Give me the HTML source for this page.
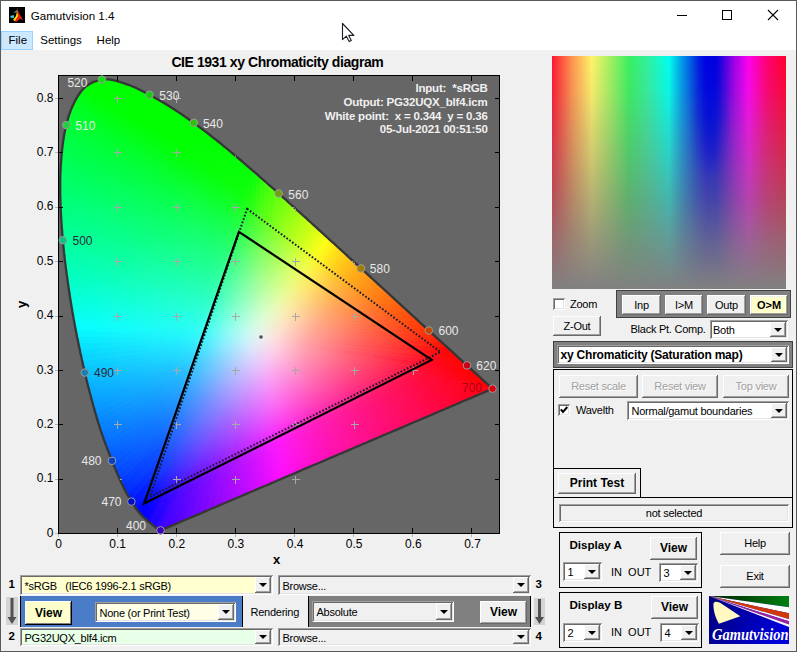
<!DOCTYPE html>
<html><head><meta charset="utf-8">
<style>
*{margin:0;padding:0;box-sizing:border-box}
html,body{width:797px;height:652px;overflow:hidden;background:#f0f0f0;font-family:"Liberation Sans",sans-serif;color:#000}
.a{position:absolute}
#win{position:absolute;left:0;top:0;width:797px;height:652px;border:1px solid #5a5a5a;background:#f0f0f0}
#title{position:absolute;left:0;top:0;width:797px;height:30px;background:#fff}
#menu{position:absolute;left:0;top:30px;width:797px;height:20px;background:#fff}
.mi{position:absolute;top:4.7px;font-size:11.5px;line-height:1}
.t{position:absolute;white-space:nowrap;line-height:1}
.btn{position:absolute;background:#f0f0f0;box-shadow:inset -1px -1px #696969,inset 1px 1px #fff,inset -2px -2px #a0a0a0,inset 2px 2px #f0f0f0;text-align:center;white-space:nowrap}
.dd{position:absolute;background:#fff;box-shadow:inset 1px 1px #a0a0a0,inset -1px -1px #fff,inset 2px 2px #696969,inset -2px -2px #e3e3e3;white-space:nowrap;overflow:hidden}
.dd .ar{position:absolute;right:2px;top:2px;bottom:2px;width:16px;background:#f0f0f0;box-shadow:inset -1px -1px #696969,inset 1px 1px #fff,inset -2px -2px #a0a0a0}
.dd .ar:after{content:"";position:absolute;left:4px;top:50%;margin-top:-2px;border-left:4px solid transparent;border-right:4px solid transparent;border-top:4px solid #000}
.dd .tx{position:absolute;left:4.5px;top:0;bottom:0;padding-top:1px;display:flex;align-items:center}
.pan{position:absolute;border:1px solid #000}
.c{font-size:11px;letter-spacing:-.25px}
.dis{color:#a0a0a0;text-shadow:1px 1px #fff}
.cb{position:absolute;width:12px;height:12px;background:#fff;box-shadow:inset 1px 1px #a0a0a0,inset -1px -1px #fff,inset 2px 2px #696969,inset -2px -2px #e3e3e3}
.yb{box-shadow:inset -1px -1px #000,inset 1px 1px #fff,inset -2px -2px #808080}
</style></head><body>
<div id="win">
</div>
<div id="title">
  <div class="a" style="left:9px;top:7px;width:16px;height:16px;background:#000">
    <svg width="16" height="16" viewBox="0 0 16 16" style="position:absolute;left:0;top:0">
      <path d="M8 1 L10 6 L14 13 L11 12 L7 15 L5 13 L8 8 Z" fill="#e02010"/>
      <path d="M8 4 L9 9 L6 14 L4 13 L7 9 Z" fill="#ffe000"/>
      <path d="M1 9 L5 8 L5 11 L2 11 Z" fill="#40c0c0"/>
      <path d="M4 6 L8 3 L8 5 Z" fill="#30b0c0"/>
    </svg>
  </div>
  <div class="t" style="left:30.7px;top:10.1px;font-size:11.6px">Gamutvision 1.4</div>
  <div class="a" style="left:677px;top:15px;width:10px;height:1px;background:#000"></div>
  <div class="a" style="left:722px;top:10px;width:10px;height:10px;border:1px solid #000"></div>
  <svg class="a" style="left:767px;top:9px" width="12" height="12" viewBox="0 0 12 12"><path d="M1 1 L11 11 M11 1 L1 11" stroke="#000" stroke-width="1.1"/></svg>
</div>
<div id="menu">
  <div class="a" style="left:1px;top:1px;width:32px;height:19px;background:#cce8ff;border:1px solid #99d1ff"></div>
  <div class="mi" style="left:8.5px">File</div>
  <div class="mi" style="left:40.3px">Settings</div>
  <div class="mi" style="left:96.6px">Help</div>
</div>
<div class="a" style="left:0;top:0;width:797px;height:652px;border:1px solid #5a5a5a;pointer-events:none"></div>

<!-- plot title -->
<div class="t" style="left:171.4px;top:55px;font-size:14px;letter-spacing:-.43px;font-weight:bold">CIE 1931 xy Chromaticity diagram</div>

<!-- plot -->
<svg class="a" style="left:0;top:0" width="797" height="652" viewBox="0 0 797 652">
  <rect x="58.5" y="75.5" width="441" height="458" fill="#666666" stroke="#000" stroke-width="1"/>
  <defs><linearGradient id="g0" gradientUnits="userSpaceOnUse" x1="262.4" y1="338.1" x2="156.4" y2="527.7"><stop offset="0" stop-color="#eeefef"/><stop offset="0.1" stop-color="#ddd6fe"/><stop offset="0.4" stop-color="#9577ff"/><stop offset="0.725" stop-color="#5b19ff"/><stop offset="0.825" stop-color="#4d06ff"/><stop offset="1" stop-color="#3701ff"/></linearGradient><linearGradient id="g1" gradientUnits="userSpaceOnUse" x1="262.4" y1="338.1" x2="128.3" y2="505.5"><stop offset="0" stop-color="#eeefef"/><stop offset="0.1" stop-color="#dcd7fe"/><stop offset="0.4" stop-color="#907aff"/><stop offset="0.725" stop-color="#521fff"/><stop offset="0.825" stop-color="#4308ff"/><stop offset="1" stop-color="#2a01ff"/></linearGradient><linearGradient id="g2" gradientUnits="userSpaceOnUse" x1="262.4" y1="338.1" x2="123.6" y2="500.2"><stop offset="0" stop-color="#eeefef"/><stop offset="0.1" stop-color="#dbd8fe"/><stop offset="0.4" stop-color="#8c7dff"/><stop offset="0.75" stop-color="#4520ff"/><stop offset="0.875" stop-color="#3005ff"/><stop offset="1" stop-color="#1b01ff"/></linearGradient><linearGradient id="g3" gradientUnits="userSpaceOnUse" x1="262.4" y1="338.1" x2="115.8" y2="490.4"><stop offset="0" stop-color="#eeefef"/><stop offset="0.075" stop-color="#e1e0fc"/><stop offset="0.375" stop-color="#8d87ff"/><stop offset="0.75" stop-color="#3929ff"/><stop offset="0.9" stop-color="#1b05ff"/><stop offset="1" stop-color="#0202ff"/></linearGradient><linearGradient id="g4" gradientUnits="userSpaceOnUse" x1="262.4" y1="338.1" x2="102.0" y2="465.7"><stop offset="0" stop-color="#eeefef"/><stop offset="0.075" stop-color="#e0e1fc"/><stop offset="0.375" stop-color="#888bff"/><stop offset="0.75" stop-color="#2d33ff"/><stop offset="0.925" stop-color="#0508ff"/><stop offset="0.975" stop-color="#0202ff"/><stop offset="1" stop-color="#0202ff"/></linearGradient><linearGradient id="g5" gradientUnits="userSpaceOnUse" x1="262.4" y1="338.1" x2="97.8" y2="454.4"><stop offset="0" stop-color="#eeefef"/><stop offset="0.075" stop-color="#dfe2fc"/><stop offset="0.375" stop-color="#858eff"/><stop offset="0.75" stop-color="#253aff"/><stop offset="0.9" stop-color="#051aff"/><stop offset="0.975" stop-color="#0205ff"/><stop offset="1" stop-color="#0202ff"/></linearGradient><linearGradient id="g6" gradientUnits="userSpaceOnUse" x1="262.4" y1="338.1" x2="94.6" y2="442.1"><stop offset="0" stop-color="#eeefef"/><stop offset="0.075" stop-color="#dfe2fc"/><stop offset="0.375" stop-color="#8291ff"/><stop offset="0.725" stop-color="#2346ff"/><stop offset="0.85" stop-color="#092eff"/><stop offset="1" stop-color="#020fff"/></linearGradient><linearGradient id="g7" gradientUnits="userSpaceOnUse" x1="262.4" y1="338.1" x2="93.0" y2="434.0"><stop offset="0" stop-color="#eeefef"/><stop offset="0.075" stop-color="#dee3fc"/><stop offset="0.4" stop-color="#768fff"/><stop offset="0.65" stop-color="#2e5bff"/><stop offset="0.8" stop-color="#0c40ff"/><stop offset="0.95" stop-color="#0427ff"/><stop offset="1" stop-color="#021eff"/></linearGradient><linearGradient id="g8" gradientUnits="userSpaceOnUse" x1="262.4" y1="338.1" x2="92.1" y2="427.3"><stop offset="0" stop-color="#eeefef"/><stop offset="0.075" stop-color="#dee4fc"/><stop offset="0.4" stop-color="#7292ff"/><stop offset="0.625" stop-color="#2f65ff"/><stop offset="0.775" stop-color="#0e4bff"/><stop offset="0.925" stop-color="#0533ff"/><stop offset="1" stop-color="#0327ff"/></linearGradient><linearGradient id="g9" gradientUnits="userSpaceOnUse" x1="262.4" y1="338.1" x2="91.4" y2="421.0"><stop offset="0" stop-color="#eeefef"/><stop offset="0.075" stop-color="#dde4fc"/><stop offset="0.4" stop-color="#6f95ff"/><stop offset="0.6" stop-color="#316eff"/><stop offset="0.75" stop-color="#1054ff"/><stop offset="0.9" stop-color="#063eff"/><stop offset="1" stop-color="#032fff"/></linearGradient><linearGradient id="g10" gradientUnits="userSpaceOnUse" x1="262.4" y1="338.1" x2="91.1" y2="417.2"><stop offset="0" stop-color="#eeefef"/><stop offset="0.075" stop-color="#dde5fc"/><stop offset="0.4" stop-color="#6b99ff"/><stop offset="0.575" stop-color="#3378ff"/><stop offset="0.725" stop-color="#115fff"/><stop offset="0.85" stop-color="#084cff"/><stop offset="1" stop-color="#0338ff"/></linearGradient><linearGradient id="g11" gradientUnits="userSpaceOnUse" x1="262.4" y1="338.1" x2="90.9" y2="414.1"><stop offset="0" stop-color="#eeefef"/><stop offset="0.075" stop-color="#dce6fc"/><stop offset="0.4" stop-color="#679cff"/><stop offset="0.575" stop-color="#2f7cff"/><stop offset="0.725" stop-color="#1064ff"/><stop offset="1" stop-color="#0440ff"/></linearGradient><linearGradient id="g12" gradientUnits="userSpaceOnUse" x1="262.4" y1="338.1" x2="90.6" y2="410.6"><stop offset="0" stop-color="#eeefef"/><stop offset="0.075" stop-color="#dce7fc"/><stop offset="0.425" stop-color="#5b9bff"/><stop offset="0.55" stop-color="#3185ff"/><stop offset="0.7" stop-color="#126eff"/><stop offset="1" stop-color="#0447ff"/></linearGradient><linearGradient id="g13" gradientUnits="userSpaceOnUse" x1="262.4" y1="338.1" x2="90.4" y2="407.1"><stop offset="0" stop-color="#eeefef"/><stop offset="0.1" stop-color="#d2e2fd"/><stop offset="0.425" stop-color="#569fff"/><stop offset="0.55" stop-color="#2d8aff"/><stop offset="0.675" stop-color="#1478ff"/><stop offset="0.975" stop-color="#0552ff"/><stop offset="1" stop-color="#0450ff"/></linearGradient><linearGradient id="g14" gradientUnits="userSpaceOnUse" x1="262.4" y1="338.1" x2="90.3" y2="405.5"><stop offset="0" stop-color="#eeefef"/><stop offset="0.1" stop-color="#d2e3fd"/><stop offset="0.425" stop-color="#52a3ff"/><stop offset="0.525" stop-color="#3093ff"/><stop offset="0.625" stop-color="#1a84ff"/><stop offset="0.775" stop-color="#0d70ff"/><stop offset="1" stop-color="#0557ff"/></linearGradient><linearGradient id="g15" gradientUnits="userSpaceOnUse" x1="262.4" y1="338.1" x2="90.3" y2="405.1"><stop offset="0" stop-color="#eeefef"/><stop offset="0.1" stop-color="#d1e4fd"/><stop offset="0.45" stop-color="#44a2ff"/><stop offset="0.575" stop-color="#218fff"/><stop offset="0.725" stop-color="#107bff"/><stop offset="1" stop-color="#055eff"/></linearGradient><linearGradient id="g16" gradientUnits="userSpaceOnUse" x1="262.4" y1="338.1" x2="90.1" y2="403.7"><stop offset="0" stop-color="#eeefef"/><stop offset="0.1" stop-color="#d0e5fd"/><stop offset="0.45" stop-color="#41a6ff"/><stop offset="0.575" stop-color="#1f94ff"/><stop offset="0.725" stop-color="#1181ff"/><stop offset="1" stop-color="#0564ff"/></linearGradient><linearGradient id="g17" gradientUnits="userSpaceOnUse" x1="262.4" y1="338.1" x2="89.9" y2="401.5"><stop offset="0" stop-color="#eeefef"/><stop offset="0.1" stop-color="#d0e6fd"/><stop offset="0.45" stop-color="#3eaaff"/><stop offset="0.55" stop-color="#229cff"/><stop offset="0.7" stop-color="#1289ff"/><stop offset="1" stop-color="#066bff"/></linearGradient><linearGradient id="g18" gradientUnits="userSpaceOnUse" x1="262.4" y1="338.1" x2="89.5" y2="398.7"><stop offset="0" stop-color="#eeefef"/><stop offset="0.1" stop-color="#cfe7fd"/><stop offset="0.425" stop-color="#43b1ff"/><stop offset="0.525" stop-color="#25a4ff"/><stop offset="0.65" stop-color="#1594ff"/><stop offset="1" stop-color="#0672ff"/></linearGradient><linearGradient id="g19" gradientUnits="userSpaceOnUse" x1="262.4" y1="338.1" x2="89.2" y2="396.2"><stop offset="0" stop-color="#eeefef"/><stop offset="0.1" stop-color="#cfe8fd"/><stop offset="0.425" stop-color="#40b4ff"/><stop offset="0.525" stop-color="#24a7ff"/><stop offset="0.65" stop-color="#1698ff"/><stop offset="1" stop-color="#0678ff"/></linearGradient><linearGradient id="g20" gradientUnits="userSpaceOnUse" x1="262.4" y1="338.1" x2="89.0" y2="394.4"><stop offset="0" stop-color="#eeefef"/><stop offset="0.1" stop-color="#cee9fd"/><stop offset="0.425" stop-color="#3fb7ff"/><stop offset="0.525" stop-color="#23aaff"/><stop offset="0.65" stop-color="#169bff"/><stop offset="1" stop-color="#067bff"/></linearGradient><linearGradient id="g21" gradientUnits="userSpaceOnUse" x1="262.4" y1="338.1" x2="88.7" y2="391.9"><stop offset="0" stop-color="#eeefef"/><stop offset="0.1" stop-color="#cee9fd"/><stop offset="0.4" stop-color="#46bdff"/><stop offset="0.5" stop-color="#26b0ff"/><stop offset="0.625" stop-color="#18a2ff"/><stop offset="1" stop-color="#0681ff"/></linearGradient><linearGradient id="g22" gradientUnits="userSpaceOnUse" x1="262.4" y1="338.1" x2="88.5" y2="390.1"><stop offset="0" stop-color="#eeefef"/><stop offset="0.1" stop-color="#cdeafd"/><stop offset="0.325" stop-color="#65caff"/><stop offset="0.4" stop-color="#43c0ff"/><stop offset="0.5" stop-color="#25b4ff"/><stop offset="0.625" stop-color="#18a7ff"/><stop offset="1" stop-color="#0787ff"/></linearGradient><linearGradient id="g23" gradientUnits="userSpaceOnUse" x1="262.4" y1="338.1" x2="88.3" y2="388.6"><stop offset="0" stop-color="#eeefef"/><stop offset="0.1" stop-color="#cdebfc"/><stop offset="0.3" stop-color="#6fd0ff"/><stop offset="0.4" stop-color="#40c4ff"/><stop offset="0.475" stop-color="#29bbff"/><stop offset="0.6" stop-color="#1aaeff"/><stop offset="1" stop-color="#078eff"/></linearGradient><linearGradient id="g24" gradientUnits="userSpaceOnUse" x1="262.4" y1="338.1" x2="88.1" y2="387.2"><stop offset="0" stop-color="#eeefef"/><stop offset="0.1" stop-color="#ccecfc"/><stop offset="0.3" stop-color="#6cd3ff"/><stop offset="0.375" stop-color="#47caff"/><stop offset="0.45" stop-color="#2dc2ff"/><stop offset="0.55" stop-color="#1db8ff"/><stop offset="1" stop-color="#0794ff"/></linearGradient><linearGradient id="g25" gradientUnits="userSpaceOnUse" x1="262.4" y1="338.1" x2="87.8" y2="385.7"><stop offset="0" stop-color="#eeefef"/><stop offset="0.1" stop-color="#cbedfc"/><stop offset="0.275" stop-color="#76d9ff"/><stop offset="0.375" stop-color="#45ceff"/><stop offset="0.45" stop-color="#2bc6ff"/><stop offset="0.55" stop-color="#1dbcff"/><stop offset="1" stop-color="#079bff"/></linearGradient><linearGradient id="g26" gradientUnits="userSpaceOnUse" x1="262.4" y1="338.1" x2="87.6" y2="384.6"><stop offset="0" stop-color="#eeefef"/><stop offset="0.1" stop-color="#cbedfb"/><stop offset="0.275" stop-color="#75dbff"/><stop offset="0.375" stop-color="#43d0ff"/><stop offset="0.45" stop-color="#2ac9ff"/><stop offset="0.575" stop-color="#1cbeff"/><stop offset="1" stop-color="#07a1ff"/></linearGradient><linearGradient id="g27" gradientUnits="userSpaceOnUse" x1="262.4" y1="338.1" x2="87.5" y2="383.9"><stop offset="0" stop-color="#eeefef"/><stop offset="0.1" stop-color="#caeefb"/><stop offset="0.25" stop-color="#80dfff"/><stop offset="0.35" stop-color="#4cd5ff"/><stop offset="0.425" stop-color="#2fcdff"/><stop offset="0.525" stop-color="#1fc5ff"/><stop offset="1" stop-color="#08a4ff"/></linearGradient><linearGradient id="g28" gradientUnits="userSpaceOnUse" x1="262.4" y1="338.1" x2="87.3" y2="383.1"><stop offset="0" stop-color="#eeefef"/><stop offset="0.1" stop-color="#caeefb"/><stop offset="0.25" stop-color="#7fe0ff"/><stop offset="0.35" stop-color="#4bd7ff"/><stop offset="0.425" stop-color="#2fd0ff"/><stop offset="0.525" stop-color="#1fc7ff"/><stop offset="1" stop-color="#08a8ff"/></linearGradient><linearGradient id="g29" gradientUnits="userSpaceOnUse" x1="262.4" y1="338.1" x2="87.2" y2="382.4"><stop offset="0" stop-color="#eeefef"/><stop offset="0.1" stop-color="#caeefb"/><stop offset="0.225" stop-color="#8ce4fe"/><stop offset="0.35" stop-color="#49d8ff"/><stop offset="0.425" stop-color="#2ed2ff"/><stop offset="0.525" stop-color="#1fc9ff"/><stop offset="1" stop-color="#08acff"/></linearGradient><linearGradient id="g30" gradientUnits="userSpaceOnUse" x1="262.4" y1="338.1" x2="87.0" y2="381.6"><stop offset="0" stop-color="#eeefef"/><stop offset="0.1" stop-color="#c9effb"/><stop offset="0.225" stop-color="#8be5fe"/><stop offset="0.35" stop-color="#48daff"/><stop offset="0.425" stop-color="#2dd4ff"/><stop offset="0.525" stop-color="#1fccff"/><stop offset="1" stop-color="#08afff"/></linearGradient><linearGradient id="g31" gradientUnits="userSpaceOnUse" x1="262.4" y1="338.1" x2="86.8" y2="380.9"><stop offset="0" stop-color="#eeefef"/><stop offset="0.1" stop-color="#c9effa"/><stop offset="0.225" stop-color="#8ae6fe"/><stop offset="0.325" stop-color="#51deff"/><stop offset="0.425" stop-color="#2cd6ff"/><stop offset="0.55" stop-color="#1ecdff"/><stop offset="1" stop-color="#08b3ff"/></linearGradient><linearGradient id="g32" gradientUnits="userSpaceOnUse" x1="262.4" y1="338.1" x2="86.6" y2="380.1"><stop offset="0" stop-color="#eeefef"/><stop offset="0.1" stop-color="#c8f0fa"/><stop offset="0.225" stop-color="#89e7fe"/><stop offset="0.325" stop-color="#50e0ff"/><stop offset="0.4" stop-color="#32daff"/><stop offset="0.5" stop-color="#21d3ff"/><stop offset="1" stop-color="#08b7ff"/></linearGradient><linearGradient id="g33" gradientUnits="userSpaceOnUse" x1="262.4" y1="338.1" x2="86.4" y2="379.0"><stop offset="0" stop-color="#eeefef"/><stop offset="0.1" stop-color="#c8f0fa"/><stop offset="0.225" stop-color="#88e9fe"/><stop offset="0.325" stop-color="#4fe2fe"/><stop offset="0.4" stop-color="#30ddff"/><stop offset="0.5" stop-color="#21d7ff"/><stop offset="1" stop-color="#08bdff"/></linearGradient><linearGradient id="g34" gradientUnits="userSpaceOnUse" x1="262.4" y1="338.1" x2="86.1" y2="378.2"><stop offset="0" stop-color="#eeefef"/><stop offset="0.1" stop-color="#c7f1fa"/><stop offset="0.225" stop-color="#85ebfd"/><stop offset="0.325" stop-color="#4ce5fe"/><stop offset="0.4" stop-color="#2fe1ff"/><stop offset="0.5" stop-color="#21dbff"/><stop offset="1" stop-color="#08c4ff"/></linearGradient><linearGradient id="g35" gradientUnits="userSpaceOnUse" x1="262.4" y1="338.1" x2="85.9" y2="377.4"><stop offset="0" stop-color="#eeefef"/><stop offset="0.1" stop-color="#c7f2f9"/><stop offset="0.225" stop-color="#83edfd"/><stop offset="0.325" stop-color="#4ae8fe"/><stop offset="0.4" stop-color="#2ee4fe"/><stop offset="0.5" stop-color="#21dfff"/><stop offset="1" stop-color="#08cbff"/></linearGradient><linearGradient id="g36" gradientUnits="userSpaceOnUse" x1="262.4" y1="338.1" x2="85.6" y2="376.5"><stop offset="0" stop-color="#eeefef"/><stop offset="0.1" stop-color="#c6f3f9"/><stop offset="0.225" stop-color="#81effc"/><stop offset="0.3" stop-color="#54ecfd"/><stop offset="0.375" stop-color="#33e9fe"/><stop offset="0.475" stop-color="#23e5fe"/><stop offset="1" stop-color="#08d3ff"/></linearGradient><linearGradient id="g37" gradientUnits="userSpaceOnUse" x1="262.4" y1="338.1" x2="85.3" y2="375.7"><stop offset="0" stop-color="#eeefef"/><stop offset="0.1" stop-color="#c5f4f9"/><stop offset="0.225" stop-color="#7ff0fb"/><stop offset="0.325" stop-color="#46eefd"/><stop offset="0.375" stop-color="#32ecfe"/><stop offset="0.475" stop-color="#22e9fe"/><stop offset="1" stop-color="#07daff"/></linearGradient><linearGradient id="g38" gradientUnits="userSpaceOnUse" x1="262.4" y1="338.1" x2="84.9" y2="374.7"><stop offset="0" stop-color="#eeefef"/><stop offset="0.1" stop-color="#c5f4f8"/><stop offset="0.225" stop-color="#7df2fa"/><stop offset="0.3" stop-color="#4ff0fb"/><stop offset="0.375" stop-color="#30effc"/><stop offset="0.475" stop-color="#22edfd"/><stop offset="1" stop-color="#07e2ff"/></linearGradient><linearGradient id="g39" gradientUnits="userSpaceOnUse" x1="262.4" y1="338.1" x2="84.5" y2="373.7"><stop offset="0" stop-color="#eeefef"/><stop offset="0.1" stop-color="#c4f5f8"/><stop offset="0.225" stop-color="#7bf4fa"/><stop offset="0.3" stop-color="#4df3fa"/><stop offset="0.35" stop-color="#36f2fb"/><stop offset="0.425" stop-color="#26f1fc"/><stop offset="0.95" stop-color="#09ebff"/><stop offset="1" stop-color="#07ebff"/></linearGradient><linearGradient id="g40" gradientUnits="userSpaceOnUse" x1="262.4" y1="338.1" x2="84.0" y2="372.6"><stop offset="0" stop-color="#eeefef"/><stop offset="0.075" stop-color="#d0f5f7"/><stop offset="0.175" stop-color="#99f6f9"/><stop offset="0.275" stop-color="#57f5f9"/><stop offset="0.35" stop-color="#34f5fa"/><stop offset="0.425" stop-color="#25f4fa"/><stop offset="0.925" stop-color="#09f4ff"/><stop offset="1" stop-color="#07f3ff"/></linearGradient><linearGradient id="g41" gradientUnits="userSpaceOnUse" x1="262.4" y1="338.1" x2="83.5" y2="371.5"><stop offset="0" stop-color="#eeefef"/><stop offset="0.075" stop-color="#cff6f6"/><stop offset="0.175" stop-color="#97f7f8"/><stop offset="0.275" stop-color="#55f7f8"/><stop offset="0.35" stop-color="#33f7f8"/><stop offset="0.425" stop-color="#25f7f9"/><stop offset="0.925" stop-color="#09fcff"/><stop offset="1" stop-color="#07fcff"/></linearGradient><linearGradient id="g42" gradientUnits="userSpaceOnUse" x1="262.4" y1="338.1" x2="82.9" y2="370.2"><stop offset="0" stop-color="#eeefef"/><stop offset="0.075" stop-color="#cef6f6"/><stop offset="0.175" stop-color="#96f8f7"/><stop offset="0.275" stop-color="#53f9f7"/><stop offset="0.35" stop-color="#31f9f6"/><stop offset="0.425" stop-color="#25f9f6"/><stop offset="0.925" stop-color="#09fff9"/><stop offset="1" stop-color="#06fff9"/></linearGradient><linearGradient id="g43" gradientUnits="userSpaceOnUse" x1="262.4" y1="338.1" x2="82.2" y2="368.8"><stop offset="0" stop-color="#eeefef"/><stop offset="0.075" stop-color="#cef7f5"/><stop offset="0.175" stop-color="#94f9f5"/><stop offset="0.275" stop-color="#51faf4"/><stop offset="0.325" stop-color="#38faf4"/><stop offset="0.375" stop-color="#2bfaf4"/><stop offset="0.725" stop-color="#11fef2"/><stop offset="1" stop-color="#06fff0"/></linearGradient><linearGradient id="g44" gradientUnits="userSpaceOnUse" x1="262.4" y1="338.1" x2="81.6" y2="367.7"><stop offset="0" stop-color="#eeefef"/><stop offset="0.075" stop-color="#cdf7f5"/><stop offset="0.175" stop-color="#92f9f4"/><stop offset="0.275" stop-color="#4efaf2"/><stop offset="0.325" stop-color="#36fbf2"/><stop offset="0.4" stop-color="#26fcf1"/><stop offset="0.9" stop-color="#09ffea"/><stop offset="1" stop-color="#06ffe8"/></linearGradient><linearGradient id="g45" gradientUnits="userSpaceOnUse" x1="262.4" y1="338.1" x2="81.1" y2="366.8"><stop offset="0" stop-color="#eeefef"/><stop offset="0.075" stop-color="#cdf8f4"/><stop offset="0.175" stop-color="#90faf3"/><stop offset="0.275" stop-color="#4cfbf0"/><stop offset="0.325" stop-color="#34fcef"/><stop offset="0.4" stop-color="#26fdee"/><stop offset="0.875" stop-color="#0affe3"/><stop offset="1" stop-color="#05ffe1"/></linearGradient><linearGradient id="g46" gradientUnits="userSpaceOnUse" x1="262.4" y1="338.1" x2="80.6" y2="365.9"><stop offset="0" stop-color="#eeefef"/><stop offset="0.075" stop-color="#ccf8f4"/><stop offset="0.175" stop-color="#8efbf1"/><stop offset="0.25" stop-color="#58fcef"/><stop offset="0.325" stop-color="#33fded"/><stop offset="0.4" stop-color="#25feea"/><stop offset="0.875" stop-color="#09ffdc"/><stop offset="1" stop-color="#05ffd9"/></linearGradient><linearGradient id="g47" gradientUnits="userSpaceOnUse" x1="262.4" y1="338.1" x2="80.0" y2="365.0"><stop offset="0" stop-color="#eeefef"/><stop offset="0.075" stop-color="#cbf8f3"/><stop offset="0.175" stop-color="#8cfbf0"/><stop offset="0.25" stop-color="#56fded"/><stop offset="0.325" stop-color="#31feea"/><stop offset="0.4" stop-color="#25fee7"/><stop offset="0.875" stop-color="#09ffd5"/><stop offset="1" stop-color="#04ffd2"/></linearGradient><linearGradient id="g48" gradientUnits="userSpaceOnUse" x1="262.4" y1="338.1" x2="79.4" y2="363.9"><stop offset="0" stop-color="#eeefef"/><stop offset="0.075" stop-color="#cbf9f3"/><stop offset="0.175" stop-color="#8afcef"/><stop offset="0.25" stop-color="#54feeb"/><stop offset="0.3" stop-color="#39fee8"/><stop offset="0.35" stop-color="#2bfee6"/><stop offset="0.7" stop-color="#10ffd5"/><stop offset="1" stop-color="#04ffca"/></linearGradient><linearGradient id="g49" gradientUnits="userSpaceOnUse" x1="262.4" y1="338.1" x2="78.7" y2="362.8"><stop offset="0" stop-color="#eeefef"/><stop offset="0.075" stop-color="#caf9f2"/><stop offset="0.175" stop-color="#88fded"/><stop offset="0.25" stop-color="#52fee9"/><stop offset="0.3" stop-color="#36fee5"/><stop offset="0.375" stop-color="#26ffe1"/><stop offset="0.825" stop-color="#0affca"/><stop offset="1" stop-color="#04ffc3"/></linearGradient><linearGradient id="g50" gradientUnits="userSpaceOnUse" x1="262.4" y1="338.1" x2="77.9" y2="361.7"><stop offset="0" stop-color="#eeefef"/><stop offset="0.075" stop-color="#caf9f2"/><stop offset="0.175" stop-color="#86fdec"/><stop offset="0.25" stop-color="#4ffee6"/><stop offset="0.3" stop-color="#35fee3"/><stop offset="0.375" stop-color="#26ffdd"/><stop offset="0.825" stop-color="#09ffc3"/><stop offset="1" stop-color="#03ffbc"/></linearGradient><linearGradient id="g51" gradientUnits="userSpaceOnUse" x1="262.4" y1="338.1" x2="77.0" y2="360.4"><stop offset="0" stop-color="#eeefef"/><stop offset="0.075" stop-color="#c9faf1"/><stop offset="0.175" stop-color="#84feea"/><stop offset="0.25" stop-color="#4dfee4"/><stop offset="0.3" stop-color="#34ffe0"/><stop offset="0.35" stop-color="#28ffdc"/><stop offset="0.775" stop-color="#0bffc0"/><stop offset="1" stop-color="#03ffb6"/></linearGradient><linearGradient id="g52" gradientUnits="userSpaceOnUse" x1="262.4" y1="338.1" x2="76.0" y2="359.0"><stop offset="0" stop-color="#eeefef"/><stop offset="0.075" stop-color="#c8faf1"/><stop offset="0.175" stop-color="#83fee9"/><stop offset="0.25" stop-color="#4bfee1"/><stop offset="0.3" stop-color="#32ffdd"/><stop offset="0.375" stop-color="#25ffd6"/><stop offset="0.8" stop-color="#09ffb9"/><stop offset="1" stop-color="#03ffaf"/></linearGradient><linearGradient id="g53" gradientUnits="userSpaceOnUse" x1="262.4" y1="338.1" x2="74.9" y2="357.4"><stop offset="0" stop-color="#eeefef"/><stop offset="0.075" stop-color="#c8fbf0"/><stop offset="0.175" stop-color="#81fee7"/><stop offset="0.225" stop-color="#59fee2"/><stop offset="0.275" stop-color="#3cffdd"/><stop offset="0.3" stop-color="#30ffda"/><stop offset="0.375" stop-color="#24ffd3"/><stop offset="0.8" stop-color="#09ffb3"/><stop offset="1" stop-color="#02ffa9"/></linearGradient><linearGradient id="g54" gradientUnits="userSpaceOnUse" x1="262.4" y1="338.1" x2="73.6" y2="355.7"><stop offset="0" stop-color="#eeefef"/><stop offset="0.075" stop-color="#c7fbef"/><stop offset="0.175" stop-color="#7ffee5"/><stop offset="0.225" stop-color="#57ffdf"/><stop offset="0.275" stop-color="#3affda"/><stop offset="0.325" stop-color="#2affd4"/><stop offset="0.65" stop-color="#10ffb8"/><stop offset="1" stop-color="#02ffa3"/></linearGradient><linearGradient id="g55" gradientUnits="userSpaceOnUse" x1="262.4" y1="338.1" x2="72.5" y2="354.1"><stop offset="0" stop-color="#eeefef"/><stop offset="0.075" stop-color="#c7fbef"/><stop offset="0.175" stop-color="#7dfee3"/><stop offset="0.225" stop-color="#55ffdd"/><stop offset="0.275" stop-color="#38ffd7"/><stop offset="0.325" stop-color="#29ffd1"/><stop offset="0.675" stop-color="#0effb1"/><stop offset="1" stop-color="#02ff9d"/></linearGradient><linearGradient id="g56" gradientUnits="userSpaceOnUse" x1="262.4" y1="338.1" x2="71.2" y2="352.5"><stop offset="0" stop-color="#eeefef"/><stop offset="0.075" stop-color="#c6fcee"/><stop offset="0.175" stop-color="#7bfee1"/><stop offset="0.225" stop-color="#53ffda"/><stop offset="0.275" stop-color="#35ffd4"/><stop offset="0.325" stop-color="#28ffcd"/><stop offset="0.675" stop-color="#0dffaa"/><stop offset="1" stop-color="#01ff96"/></linearGradient><linearGradient id="g57" gradientUnits="userSpaceOnUse" x1="262.4" y1="338.1" x2="69.5" y2="350.2"><stop offset="0" stop-color="#eeefef"/><stop offset="0.075" stop-color="#c5fced"/><stop offset="0.175" stop-color="#78ffde"/><stop offset="0.225" stop-color="#50ffd7"/><stop offset="0.275" stop-color="#33ffd0"/><stop offset="0.325" stop-color="#26ffc9"/><stop offset="0.7" stop-color="#0bffa1"/><stop offset="1" stop-color="#01ff8d"/></linearGradient><linearGradient id="g58" gradientUnits="userSpaceOnUse" x1="262.4" y1="338.1" x2="67.5" y2="347.5"><stop offset="0" stop-color="#eeefef"/><stop offset="0.075" stop-color="#c4fcec"/><stop offset="0.175" stop-color="#76ffdc"/><stop offset="0.225" stop-color="#4dffd3"/><stop offset="0.275" stop-color="#32ffcc"/><stop offset="0.325" stop-color="#25ffc4"/><stop offset="0.675" stop-color="#0bff9c"/><stop offset="1" stop-color="#00ff85"/></linearGradient><linearGradient id="g59" gradientUnits="userSpaceOnUse" x1="262.4" y1="338.1" x2="65.1" y2="344.4"><stop offset="0" stop-color="#eeefef"/><stop offset="0.075" stop-color="#c3fdeb"/><stop offset="0.175" stop-color="#73ffd9"/><stop offset="0.225" stop-color="#4bffd0"/><stop offset="0.275" stop-color="#30ffc8"/><stop offset="0.35" stop-color="#22ffbc"/><stop offset="0.7" stop-color="#09ff93"/><stop offset="1" stop-color="#00ff7d"/></linearGradient><linearGradient id="g60" gradientUnits="userSpaceOnUse" x1="262.4" y1="338.1" x2="62.2" y2="340.8"><stop offset="0" stop-color="#eeefef"/><stop offset="0.075" stop-color="#c3fdea"/><stop offset="0.225" stop-color="#49ffcd"/><stop offset="0.275" stop-color="#2effc4"/><stop offset="0.35" stop-color="#21ffb8"/><stop offset="0.675" stop-color="#09ff8e"/><stop offset="1" stop-color="#00ff75"/></linearGradient><linearGradient id="g61" gradientUnits="userSpaceOnUse" x1="262.4" y1="338.1" x2="58.9" y2="336.4"><stop offset="0" stop-color="#eeefef"/><stop offset="0.075" stop-color="#c2fde9"/><stop offset="0.2" stop-color="#59ffcf"/><stop offset="0.25" stop-color="#38ffc5"/><stop offset="0.3" stop-color="#27ffbc"/><stop offset="0.6" stop-color="#0dff90"/><stop offset="0.95" stop-color="#00ff71"/><stop offset="1" stop-color="#00ff6e"/></linearGradient><linearGradient id="g62" gradientUnits="userSpaceOnUse" x1="262.4" y1="338.1" x2="55.1" y2="331.0"><stop offset="0" stop-color="#eeefef"/><stop offset="0.05" stop-color="#d2fbed"/><stop offset="0.125" stop-color="#99ffdd"/><stop offset="0.2" stop-color="#56ffcc"/><stop offset="0.25" stop-color="#36ffc1"/><stop offset="0.3" stop-color="#26ffb8"/><stop offset="0.6" stop-color="#0cff8a"/><stop offset="0.925" stop-color="#00ff6b"/><stop offset="1" stop-color="#00ff67"/></linearGradient><linearGradient id="g63" gradientUnits="userSpaceOnUse" x1="262.4" y1="338.1" x2="51.3" y2="325.4"><stop offset="0" stop-color="#eeefef"/><stop offset="0.05" stop-color="#d2fbec"/><stop offset="0.125" stop-color="#97ffdb"/><stop offset="0.2" stop-color="#53ffc9"/><stop offset="0.25" stop-color="#33ffbe"/><stop offset="0.3" stop-color="#25ffb3"/><stop offset="0.575" stop-color="#0dff86"/><stop offset="0.9" stop-color="#00ff65"/><stop offset="1" stop-color="#00ff5e"/></linearGradient><linearGradient id="g64" gradientUnits="userSpaceOnUse" x1="262.4" y1="338.1" x2="47.0" y2="318.8"><stop offset="0" stop-color="#eeefef"/><stop offset="0.05" stop-color="#d2fceb"/><stop offset="0.15" stop-color="#7effd2"/><stop offset="0.2" stop-color="#52ffc5"/><stop offset="0.25" stop-color="#32ffba"/><stop offset="0.3" stop-color="#23ffaf"/><stop offset="0.575" stop-color="#0cff80"/><stop offset="0.875" stop-color="#00ff5f"/><stop offset="1" stop-color="#00ff56"/></linearGradient><linearGradient id="g65" gradientUnits="userSpaceOnUse" x1="262.4" y1="338.1" x2="42.3" y2="311.0"><stop offset="0" stop-color="#eeefef"/><stop offset="0.05" stop-color="#d1fceb"/><stop offset="0.15" stop-color="#7dffcf"/><stop offset="0.2" stop-color="#50ffc2"/><stop offset="0.25" stop-color="#30ffb6"/><stop offset="0.3" stop-color="#23ffab"/><stop offset="0.575" stop-color="#0bff79"/><stop offset="0.875" stop-color="#00ff57"/><stop offset="1" stop-color="#00ff4e"/></linearGradient><linearGradient id="g66" gradientUnits="userSpaceOnUse" x1="262.4" y1="338.1" x2="36.2" y2="299.4"><stop offset="0" stop-color="#eeefef"/><stop offset="0.05" stop-color="#d1fcea"/><stop offset="0.15" stop-color="#7bffcd"/><stop offset="0.2" stop-color="#4fffbf"/><stop offset="0.25" stop-color="#2fffb2"/><stop offset="0.3" stop-color="#22ffa6"/><stop offset="0.55" stop-color="#0cff76"/><stop offset="0.825" stop-color="#01ff53"/><stop offset="1" stop-color="#00ff45"/></linearGradient><linearGradient id="g67" gradientUnits="userSpaceOnUse" x1="262.4" y1="338.1" x2="29.0" y2="282.9"><stop offset="0" stop-color="#eeefef"/><stop offset="0.05" stop-color="#d1fde9"/><stop offset="0.15" stop-color="#7affca"/><stop offset="0.2" stop-color="#4dffbc"/><stop offset="0.25" stop-color="#2effae"/><stop offset="0.3" stop-color="#21ffa2"/><stop offset="0.55" stop-color="#0bff6f"/><stop offset="0.825" stop-color="#00ff4b"/><stop offset="1" stop-color="#00ff3c"/></linearGradient><linearGradient id="g68" gradientUnits="userSpaceOnUse" x1="262.4" y1="338.1" x2="22.5" y2="261.5"><stop offset="0" stop-color="#eeefef"/><stop offset="0.05" stop-color="#d1fde9"/><stop offset="0.15" stop-color="#79ffc8"/><stop offset="0.2" stop-color="#4cffb9"/><stop offset="0.25" stop-color="#2dffab"/><stop offset="0.3" stop-color="#20ff9e"/><stop offset="0.55" stop-color="#0aff69"/><stop offset="0.825" stop-color="#00ff43"/><stop offset="1" stop-color="#00ff33"/></linearGradient><linearGradient id="g69" gradientUnits="userSpaceOnUse" x1="262.4" y1="338.1" x2="18.2" y2="234.4"><stop offset="0" stop-color="#eeefef"/><stop offset="0.05" stop-color="#d0fde8"/><stop offset="0.2" stop-color="#4cffb5"/><stop offset="0.25" stop-color="#2dffa7"/><stop offset="0.3" stop-color="#20ff99"/><stop offset="0.55" stop-color="#09ff62"/><stop offset="0.8" stop-color="#00ff3d"/><stop offset="1" stop-color="#00ff29"/></linearGradient><linearGradient id="g70" gradientUnits="userSpaceOnUse" x1="262.4" y1="338.1" x2="19.5" y2="196.4"><stop offset="0" stop-color="#eeefef"/><stop offset="0.05" stop-color="#d0fde7"/><stop offset="0.2" stop-color="#4cffb2"/><stop offset="0.25" stop-color="#2dffa3"/><stop offset="0.3" stop-color="#1fff95"/><stop offset="0.55" stop-color="#09ff5b"/><stop offset="0.8" stop-color="#00ff34"/><stop offset="1" stop-color="#00ff1c"/></linearGradient><linearGradient id="g71" gradientUnits="userSpaceOnUse" x1="262.4" y1="338.1" x2="40.4" y2="136.6"><stop offset="0" stop-color="#eeefef"/><stop offset="0.05" stop-color="#d1fde6"/><stop offset="0.2" stop-color="#4dffaf"/><stop offset="0.25" stop-color="#2dff9f"/><stop offset="0.3" stop-color="#1fff91"/><stop offset="0.525" stop-color="#0aff59"/><stop offset="0.775" stop-color="#00ff2d"/><stop offset="1" stop-color="#00ff0d"/></linearGradient><linearGradient id="g72" gradientUnits="userSpaceOnUse" x1="262.4" y1="338.1" x2="106.3" y2="74.4"><stop offset="0" stop-color="#eeefef"/><stop offset="0.05" stop-color="#d1fde6"/><stop offset="0.2" stop-color="#4fffad"/><stop offset="0.25" stop-color="#2fff9d"/><stop offset="0.3" stop-color="#1fff8d"/><stop offset="0.55" stop-color="#08ff4e"/><stop offset="0.85" stop-color="#00ff18"/><stop offset="0.975" stop-color="#00ff00"/><stop offset="1" stop-color="#00ff00"/></linearGradient><linearGradient id="g73" gradientUnits="userSpaceOnUse" x1="262.4" y1="338.1" x2="184.0" y2="56.7"><stop offset="0" stop-color="#eeefef"/><stop offset="0.05" stop-color="#d2fde5"/><stop offset="0.225" stop-color="#41ffa3"/><stop offset="0.275" stop-color="#26ff92"/><stop offset="0.35" stop-color="#19ff7c"/><stop offset="0.6" stop-color="#06ff3e"/><stop offset="0.925" stop-color="#00ff00"/><stop offset="1" stop-color="#00ff00"/></linearGradient><linearGradient id="g74" gradientUnits="userSpaceOnUse" x1="262.4" y1="338.1" x2="269.9" y2="84.5"><stop offset="0" stop-color="#eeefef"/><stop offset="0.05" stop-color="#d3fde5"/><stop offset="0.225" stop-color="#45ffa2"/><stop offset="0.275" stop-color="#29ff91"/><stop offset="0.325" stop-color="#1cff82"/><stop offset="0.6" stop-color="#06ff3a"/><stop offset="0.85" stop-color="#00ff05"/><stop offset="0.95" stop-color="#00ff00"/><stop offset="1" stop-color="#00ff00"/></linearGradient><linearGradient id="g75" gradientUnits="userSpaceOnUse" x1="262.4" y1="338.1" x2="318.6" y2="138.0"><stop offset="0" stop-color="#eeefef"/><stop offset="0.05" stop-color="#d4fde5"/><stop offset="0.225" stop-color="#4cffa1"/><stop offset="0.275" stop-color="#2fff90"/><stop offset="0.325" stop-color="#1fff81"/><stop offset="0.55" stop-color="#0aff43"/><stop offset="0.8" stop-color="#00ff09"/><stop offset="0.875" stop-color="#00ff00"/><stop offset="1" stop-color="#00ff00"/></linearGradient><linearGradient id="g76" gradientUnits="userSpaceOnUse" x1="262.4" y1="338.1" x2="332.1" y2="168.7"><stop offset="0" stop-color="#eeefef"/><stop offset="0.05" stop-color="#d6fde5"/><stop offset="0.25" stop-color="#45ff99"/><stop offset="0.3" stop-color="#2bff89"/><stop offset="0.375" stop-color="#19ff72"/><stop offset="0.675" stop-color="#04ff20"/><stop offset="0.825" stop-color="#00ff02"/><stop offset="1" stop-color="#00ff00"/></linearGradient><linearGradient id="g77" gradientUnits="userSpaceOnUse" x1="262.4" y1="338.1" x2="337.6" y2="190.9"><stop offset="0" stop-color="#eeefef"/><stop offset="0.05" stop-color="#d8fce5"/><stop offset="0.275" stop-color="#3fff92"/><stop offset="0.325" stop-color="#28ff82"/><stop offset="0.4" stop-color="#18ff6b"/><stop offset="0.725" stop-color="#03ff13"/><stop offset="0.825" stop-color="#01ff01"/><stop offset="1" stop-color="#00ff00"/></linearGradient><linearGradient id="g78" gradientUnits="userSpaceOnUse" x1="262.4" y1="338.1" x2="339.1" y2="200.4"><stop offset="0" stop-color="#eeefef"/><stop offset="0.075" stop-color="#cbffdc"/><stop offset="0.275" stop-color="#49ff93"/><stop offset="0.35" stop-color="#26ff7b"/><stop offset="0.425" stop-color="#17ff65"/><stop offset="0.725" stop-color="#04ff12"/><stop offset="0.825" stop-color="#01ff01"/><stop offset="1" stop-color="#00ff00"/></linearGradient><linearGradient id="g79" gradientUnits="userSpaceOnUse" x1="262.4" y1="338.1" x2="340.3" y2="211.2"><stop offset="0" stop-color="#eeefef"/><stop offset="0.075" stop-color="#cefedd"/><stop offset="0.3" stop-color="#45ff8c"/><stop offset="0.375" stop-color="#25ff75"/><stop offset="0.475" stop-color="#14ff58"/><stop offset="0.725" stop-color="#05ff12"/><stop offset="0.8" stop-color="#03ff03"/><stop offset="1" stop-color="#00ff00"/></linearGradient><linearGradient id="g80" gradientUnits="userSpaceOnUse" x1="262.4" y1="338.1" x2="340.8" y2="219.6"><stop offset="0" stop-color="#eeefef"/><stop offset="0.075" stop-color="#d1fedd"/><stop offset="0.3" stop-color="#52ff8e"/><stop offset="0.375" stop-color="#2fff77"/><stop offset="0.45" stop-color="#1aff61"/><stop offset="0.675" stop-color="#09ff1f"/><stop offset="0.8" stop-color="#04ff04"/><stop offset="1" stop-color="#00ff00"/></linearGradient><linearGradient id="g81" gradientUnits="userSpaceOnUse" x1="262.4" y1="338.1" x2="341.0" y2="226.9"><stop offset="0" stop-color="#eeefef"/><stop offset="0.075" stop-color="#d3fede"/><stop offset="0.325" stop-color="#51ff88"/><stop offset="0.4" stop-color="#31ff71"/><stop offset="0.475" stop-color="#1bff5b"/><stop offset="0.625" stop-color="#0dff2e"/><stop offset="0.775" stop-color="#06ff09"/><stop offset="0.9" stop-color="#02ff02"/><stop offset="1" stop-color="#00ff00"/></linearGradient><linearGradient id="g82" gradientUnits="userSpaceOnUse" x1="262.4" y1="338.1" x2="341.1" y2="231.8"><stop offset="0" stop-color="#eeefef"/><stop offset="0.075" stop-color="#d6fdde"/><stop offset="0.35" stop-color="#51ff82"/><stop offset="0.45" stop-color="#2aff65"/><stop offset="0.525" stop-color="#18ff4f"/><stop offset="0.725" stop-color="#09ff15"/><stop offset="0.8" stop-color="#06ff06"/><stop offset="1" stop-color="#01ff01"/></linearGradient><linearGradient id="g83" gradientUnits="userSpaceOnUse" x1="262.4" y1="338.1" x2="341.0" y2="235.8"><stop offset="0" stop-color="#eeefef"/><stop offset="0.075" stop-color="#d7fddf"/><stop offset="0.375" stop-color="#51ff7d"/><stop offset="0.475" stop-color="#2cff5f"/><stop offset="0.55" stop-color="#19ff49"/><stop offset="0.675" stop-color="#0dff23"/><stop offset="0.8" stop-color="#07ff07"/><stop offset="1" stop-color="#01ff01"/></linearGradient><linearGradient id="g84" gradientUnits="userSpaceOnUse" x1="262.4" y1="338.1" x2="341.0" y2="238.5"><stop offset="0" stop-color="#eeefef"/><stop offset="0.075" stop-color="#d9fddf"/><stop offset="0.4" stop-color="#52ff77"/><stop offset="0.5" stop-color="#2eff5a"/><stop offset="0.6" stop-color="#17ff3c"/><stop offset="0.75" stop-color="#0bff12"/><stop offset="0.825" stop-color="#07ff07"/><stop offset="1" stop-color="#02ff02"/></linearGradient><linearGradient id="g85" gradientUnits="userSpaceOnUse" x1="262.4" y1="338.1" x2="341.0" y2="241.3"><stop offset="0" stop-color="#eeefef"/><stop offset="0.075" stop-color="#dbfcdf"/><stop offset="0.45" stop-color="#4aff6b"/><stop offset="0.575" stop-color="#25ff46"/><stop offset="0.675" stop-color="#12ff27"/><stop offset="0.8" stop-color="#0aff0a"/><stop offset="1" stop-color="#03ff03"/></linearGradient><linearGradient id="g86" gradientUnits="userSpaceOnUse" x1="262.4" y1="338.1" x2="341.0" y2="243.3"><stop offset="0" stop-color="#eeefef"/><stop offset="0.1" stop-color="#d5fed9"/><stop offset="0.45" stop-color="#57ff6d"/><stop offset="0.575" stop-color="#2fff48"/><stop offset="0.725" stop-color="#10ff1b"/><stop offset="0.8" stop-color="#0bff0b"/><stop offset="1" stop-color="#04ff04"/></linearGradient><linearGradient id="g87" gradientUnits="userSpaceOnUse" x1="262.4" y1="338.1" x2="341.0" y2="244.5"><stop offset="0" stop-color="#eeefef"/><stop offset="0.1" stop-color="#d7fed9"/><stop offset="0.575" stop-color="#3cff4a"/><stop offset="0.75" stop-color="#12ff17"/><stop offset="0.825" stop-color="#0bff0b"/><stop offset="1" stop-color="#05ff05"/></linearGradient><linearGradient id="g88" gradientUnits="userSpaceOnUse" x1="262.4" y1="338.1" x2="341.1" y2="245.7"><stop offset="0" stop-color="#eeefef"/><stop offset="0.1" stop-color="#d9fdda"/><stop offset="0.625" stop-color="#3aff3c"/><stop offset="0.775" stop-color="#15ff13"/><stop offset="0.85" stop-color="#0bff0b"/><stop offset="1" stop-color="#06ff06"/></linearGradient><linearGradient id="g89" gradientUnits="userSpaceOnUse" x1="262.4" y1="338.1" x2="341.1" y2="246.6"><stop offset="0" stop-color="#eeefef"/><stop offset="0.1" stop-color="#dbfdda"/><stop offset="0.7" stop-color="#31ff28"/><stop offset="0.8" stop-color="#18ff0f"/><stop offset="0.875" stop-color="#0bff0b"/><stop offset="1" stop-color="#06ff06"/></linearGradient><linearGradient id="g90" gradientUnits="userSpaceOnUse" x1="262.4" y1="338.1" x2="341.2" y2="247.2"><stop offset="0" stop-color="#eeefef"/><stop offset="0.125" stop-color="#d6fed4"/><stop offset="0.65" stop-color="#49ff37"/><stop offset="0.8" stop-color="#23ff11"/><stop offset="0.9" stop-color="#0cff0b"/><stop offset="1" stop-color="#07ff07"/></linearGradient><linearGradient id="g91" gradientUnits="userSpaceOnUse" x1="262.4" y1="338.1" x2="341.2" y2="247.6"><stop offset="0" stop-color="#eeefef"/><stop offset="0.125" stop-color="#d8fed4"/><stop offset="0.625" stop-color="#5bff41"/><stop offset="0.8" stop-color="#32ff12"/><stop offset="0.95" stop-color="#0bff0a"/><stop offset="1" stop-color="#08ff08"/></linearGradient><linearGradient id="g92" gradientUnits="userSpaceOnUse" x1="262.4" y1="338.1" x2="341.2" y2="248.0"><stop offset="0" stop-color="#eeefef"/><stop offset="0.125" stop-color="#dafed5"/><stop offset="0.6" stop-color="#6bff4c"/><stop offset="0.775" stop-color="#47ff19"/><stop offset="0.85" stop-color="#37ff0f"/><stop offset="1" stop-color="#14ff09"/></linearGradient><linearGradient id="g93" gradientUnits="userSpaceOnUse" x1="262.4" y1="338.1" x2="341.3" y2="248.5"><stop offset="0" stop-color="#eeefef"/><stop offset="0.125" stop-color="#dcfdd5"/><stop offset="0.625" stop-color="#71ff45"/><stop offset="0.8" stop-color="#50ff15"/><stop offset="1" stop-color="#2cff0a"/></linearGradient><linearGradient id="g94" gradientUnits="userSpaceOnUse" x1="262.4" y1="338.1" x2="341.4" y2="248.9"><stop offset="0" stop-color="#eeefef"/><stop offset="0.125" stop-color="#defdd6"/><stop offset="0.625" stop-color="#7bff47"/><stop offset="0.8" stop-color="#5eff16"/><stop offset="0.925" stop-color="#4aff0e"/><stop offset="1" stop-color="#3eff0b"/></linearGradient><linearGradient id="g95" gradientUnits="userSpaceOnUse" x1="262.4" y1="338.1" x2="341.4" y2="249.2"><stop offset="0" stop-color="#eeefef"/><stop offset="0.125" stop-color="#e0fcd6"/><stop offset="0.625" stop-color="#85ff49"/><stop offset="0.8" stop-color="#6aff17"/><stop offset="0.875" stop-color="#5fff11"/><stop offset="1" stop-color="#4eff0c"/></linearGradient><linearGradient id="g96" gradientUnits="userSpaceOnUse" x1="262.4" y1="338.1" x2="341.5" y2="249.4"><stop offset="0" stop-color="#eeefef"/><stop offset="0.15" stop-color="#ddfdd0"/><stop offset="0.625" stop-color="#8cff4b"/><stop offset="0.8" stop-color="#73ff18"/><stop offset="0.875" stop-color="#69ff11"/><stop offset="1" stop-color="#59ff0c"/></linearGradient><linearGradient id="g97" gradientUnits="userSpaceOnUse" x1="262.4" y1="338.1" x2="341.5" y2="249.6"><stop offset="0" stop-color="#eeefef"/><stop offset="0.15" stop-color="#defdd0"/><stop offset="0.6" stop-color="#95ff54"/><stop offset="0.8" stop-color="#79ff19"/><stop offset="0.875" stop-color="#70ff12"/><stop offset="1" stop-color="#60ff0d"/></linearGradient><linearGradient id="g98" gradientUnits="userSpaceOnUse" x1="262.4" y1="338.1" x2="341.6" y2="249.9"><stop offset="0" stop-color="#eeefef"/><stop offset="0.15" stop-color="#dffcd1"/><stop offset="0.6" stop-color="#9aff55"/><stop offset="0.8" stop-color="#7fff1a"/><stop offset="0.875" stop-color="#76ff12"/><stop offset="1" stop-color="#68ff0d"/></linearGradient><linearGradient id="g99" gradientUnits="userSpaceOnUse" x1="262.4" y1="338.1" x2="341.6" y2="250.0"><stop offset="0" stop-color="#eeefef"/><stop offset="0.15" stop-color="#e0fcd1"/><stop offset="0.6" stop-color="#9eff56"/><stop offset="0.8" stop-color="#85ff1b"/><stop offset="0.875" stop-color="#7dff13"/><stop offset="1" stop-color="#6fff0e"/></linearGradient><linearGradient id="g100" gradientUnits="userSpaceOnUse" x1="262.4" y1="338.1" x2="341.7" y2="250.2"><stop offset="0" stop-color="#eeefef"/><stop offset="0.175" stop-color="#defdcb"/><stop offset="0.6" stop-color="#a3ff57"/><stop offset="0.8" stop-color="#8bff1b"/><stop offset="0.875" stop-color="#83ff13"/><stop offset="1" stop-color="#76ff0e"/></linearGradient><linearGradient id="g101" gradientUnits="userSpaceOnUse" x1="262.4" y1="338.1" x2="341.7" y2="250.3"><stop offset="0" stop-color="#eeefef"/><stop offset="0.175" stop-color="#dffccb"/><stop offset="0.6" stop-color="#a8ff58"/><stop offset="0.8" stop-color="#91ff1c"/><stop offset="0.875" stop-color="#89ff14"/><stop offset="1" stop-color="#7dff0f"/></linearGradient><linearGradient id="g102" gradientUnits="userSpaceOnUse" x1="262.4" y1="338.1" x2="341.7" y2="250.4"><stop offset="0" stop-color="#eeefef"/><stop offset="0.175" stop-color="#e1fccb"/><stop offset="0.6" stop-color="#adff59"/><stop offset="0.8" stop-color="#97ff1d"/><stop offset="0.875" stop-color="#90ff14"/><stop offset="1" stop-color="#84ff0f"/></linearGradient><linearGradient id="g103" gradientUnits="userSpaceOnUse" x1="262.4" y1="338.1" x2="341.7" y2="250.4"><stop offset="0" stop-color="#eeefef"/><stop offset="0.2" stop-color="#dffcc6"/><stop offset="0.6" stop-color="#b1ff5a"/><stop offset="0.8" stop-color="#9dff1e"/><stop offset="0.875" stop-color="#96ff15"/><stop offset="1" stop-color="#8bff10"/></linearGradient><linearGradient id="g104" gradientUnits="userSpaceOnUse" x1="262.4" y1="338.1" x2="341.7" y2="250.4"><stop offset="0" stop-color="#eeefef"/><stop offset="0.2" stop-color="#e1fcc6"/><stop offset="0.575" stop-color="#b9ff63"/><stop offset="0.8" stop-color="#a3ff1f"/><stop offset="0.85" stop-color="#9eff16"/><stop offset="1" stop-color="#92ff10"/></linearGradient><linearGradient id="g105" gradientUnits="userSpaceOnUse" x1="262.4" y1="338.1" x2="341.7" y2="250.4"><stop offset="0" stop-color="#eeefef"/><stop offset="0.2" stop-color="#e2fcc6"/><stop offset="0.575" stop-color="#bdff64"/><stop offset="0.8" stop-color="#a9ff1f"/><stop offset="0.875" stop-color="#a2ff16"/><stop offset="1" stop-color="#99ff11"/></linearGradient><linearGradient id="g106" gradientUnits="userSpaceOnUse" x1="262.4" y1="338.1" x2="341.7" y2="250.4"><stop offset="0" stop-color="#eeefef"/><stop offset="0.225" stop-color="#e1fcc1"/><stop offset="0.575" stop-color="#c2ff65"/><stop offset="0.8" stop-color="#afff20"/><stop offset="0.875" stop-color="#a9ff16"/><stop offset="1" stop-color="#a0ff11"/></linearGradient><linearGradient id="g107" gradientUnits="userSpaceOnUse" x1="262.4" y1="338.1" x2="341.7" y2="250.4"><stop offset="0" stop-color="#eeefef"/><stop offset="0.225" stop-color="#e3fbc1"/><stop offset="0.575" stop-color="#c6ff66"/><stop offset="0.825" stop-color="#b3ff1b"/><stop offset="1" stop-color="#a7ff11"/></linearGradient><linearGradient id="g108" gradientUnits="userSpaceOnUse" x1="262.4" y1="338.1" x2="341.7" y2="250.4"><stop offset="0" stop-color="#eeefef"/><stop offset="0.225" stop-color="#e4fbc1"/><stop offset="0.575" stop-color="#cbff67"/><stop offset="0.825" stop-color="#b9ff1c"/><stop offset="1" stop-color="#aeff12"/></linearGradient><linearGradient id="g109" gradientUnits="userSpaceOnUse" x1="262.4" y1="338.1" x2="341.8" y2="250.5"><stop offset="0" stop-color="#eeefef"/><stop offset="0.25" stop-color="#e4fbbc"/><stop offset="0.575" stop-color="#d0ff68"/><stop offset="0.825" stop-color="#bfff1c"/><stop offset="0.975" stop-color="#b6ff13"/><stop offset="1" stop-color="#b5ff12"/></linearGradient><linearGradient id="g110" gradientUnits="userSpaceOnUse" x1="262.4" y1="338.1" x2="341.8" y2="250.5"><stop offset="0" stop-color="#eeefef"/><stop offset="0.25" stop-color="#e6fabc"/><stop offset="0.575" stop-color="#d4ff69"/><stop offset="0.825" stop-color="#c5ff1d"/><stop offset="0.925" stop-color="#c0ff16"/><stop offset="1" stop-color="#bcff13"/></linearGradient><linearGradient id="g111" gradientUnits="userSpaceOnUse" x1="262.4" y1="338.1" x2="341.8" y2="250.6"><stop offset="0" stop-color="#eeefef"/><stop offset="0.25" stop-color="#e7fabc"/><stop offset="0.575" stop-color="#d8ff6a"/><stop offset="0.825" stop-color="#cbff1e"/><stop offset="0.9" stop-color="#c7ff17"/><stop offset="1" stop-color="#c3ff13"/></linearGradient><linearGradient id="g112" gradientUnits="userSpaceOnUse" x1="262.4" y1="338.1" x2="341.8" y2="250.6"><stop offset="0" stop-color="#eeefef"/><stop offset="0.25" stop-color="#e9f9bc"/><stop offset="0.575" stop-color="#ddfe6b"/><stop offset="0.825" stop-color="#d1ff1e"/><stop offset="0.9" stop-color="#ceff17"/><stop offset="1" stop-color="#caff13"/></linearGradient><linearGradient id="g113" gradientUnits="userSpaceOnUse" x1="262.4" y1="338.1" x2="341.9" y2="250.7"><stop offset="0" stop-color="#eeefef"/><stop offset="0.275" stop-color="#eaf9b7"/><stop offset="0.6" stop-color="#e0fd65"/><stop offset="0.825" stop-color="#d8ff1f"/><stop offset="0.875" stop-color="#d6ff19"/><stop offset="1" stop-color="#d1ff14"/></linearGradient><linearGradient id="g114" gradientUnits="userSpaceOnUse" x1="262.4" y1="338.1" x2="341.9" y2="250.7"><stop offset="0" stop-color="#eeefef"/><stop offset="0.275" stop-color="#ebf8b7"/><stop offset="0.6" stop-color="#e3fc65"/><stop offset="0.825" stop-color="#deff20"/><stop offset="0.875" stop-color="#dcff19"/><stop offset="1" stop-color="#d9ff14"/></linearGradient><linearGradient id="g115" gradientUnits="userSpaceOnUse" x1="262.4" y1="338.1" x2="341.9" y2="250.8"><stop offset="0" stop-color="#eeefef"/><stop offset="0.275" stop-color="#edf7b7"/><stop offset="0.6" stop-color="#e7fb66"/><stop offset="0.825" stop-color="#e5ff20"/><stop offset="0.875" stop-color="#e3ff19"/><stop offset="1" stop-color="#e0ff14"/></linearGradient><linearGradient id="g116" gradientUnits="userSpaceOnUse" x1="262.4" y1="338.1" x2="342.0" y2="250.9"><stop offset="0" stop-color="#eeefef"/><stop offset="0.3" stop-color="#eef6b2"/><stop offset="0.6" stop-color="#eaf967"/><stop offset="0.825" stop-color="#ebff21"/><stop offset="0.875" stop-color="#eaff1a"/><stop offset="1" stop-color="#e8ff14"/></linearGradient><linearGradient id="g117" gradientUnits="userSpaceOnUse" x1="262.4" y1="338.1" x2="342.0" y2="250.9"><stop offset="0" stop-color="#eeefef"/><stop offset="0.3" stop-color="#eff5b2"/><stop offset="0.6" stop-color="#edf867"/><stop offset="0.85" stop-color="#f1fe1c"/><stop offset="1" stop-color="#efff15"/></linearGradient><linearGradient id="g118" gradientUnits="userSpaceOnUse" x1="262.4" y1="338.1" x2="342.1" y2="251.0"><stop offset="0" stop-color="#eeefef"/><stop offset="0.3" stop-color="#f1f4b2"/><stop offset="0.6" stop-color="#f0f667"/><stop offset="0.85" stop-color="#f6fd1c"/><stop offset="1" stop-color="#f7ff15"/></linearGradient><linearGradient id="g119" gradientUnits="userSpaceOnUse" x1="262.4" y1="338.1" x2="342.1" y2="251.0"><stop offset="0" stop-color="#eeefef"/><stop offset="0.325" stop-color="#f2f3ac"/><stop offset="0.625" stop-color="#f3f461"/><stop offset="0.85" stop-color="#fafa1d"/><stop offset="1" stop-color="#ffff15"/></linearGradient><linearGradient id="g120" gradientUnits="userSpaceOnUse" x1="262.4" y1="338.1" x2="342.1" y2="251.0"><stop offset="0" stop-color="#eeefef"/><stop offset="0.325" stop-color="#f3f2ac"/><stop offset="0.625" stop-color="#f5f161"/><stop offset="0.85" stop-color="#fcf61d"/><stop offset="1" stop-color="#fff715"/></linearGradient><linearGradient id="g121" gradientUnits="userSpaceOnUse" x1="262.4" y1="338.1" x2="342.1" y2="251.0"><stop offset="0" stop-color="#eeefef"/><stop offset="0.325" stop-color="#f5f0ac"/><stop offset="0.625" stop-color="#f7ef61"/><stop offset="0.85" stop-color="#fef21e"/><stop offset="1" stop-color="#fff016"/></linearGradient><linearGradient id="g122" gradientUnits="userSpaceOnUse" x1="262.4" y1="338.1" x2="342.1" y2="251.0"><stop offset="0" stop-color="#eeefef"/><stop offset="0.325" stop-color="#f6efac"/><stop offset="0.625" stop-color="#f9ec61"/><stop offset="0.85" stop-color="#ffec1e"/><stop offset="1" stop-color="#ffe916"/></linearGradient><linearGradient id="g123" gradientUnits="userSpaceOnUse" x1="262.4" y1="338.1" x2="342.1" y2="251.0"><stop offset="0" stop-color="#eeefef"/><stop offset="0.325" stop-color="#f7edac"/><stop offset="0.625" stop-color="#fbe961"/><stop offset="0.85" stop-color="#ffe61e"/><stop offset="1" stop-color="#ffe216"/></linearGradient><linearGradient id="g124" gradientUnits="userSpaceOnUse" x1="262.4" y1="338.1" x2="342.1" y2="251.0"><stop offset="0" stop-color="#eeefef"/><stop offset="0.325" stop-color="#f8ecac"/><stop offset="0.625" stop-color="#fce661"/><stop offset="0.85" stop-color="#ffe01f"/><stop offset="1" stop-color="#ffdc16"/></linearGradient><linearGradient id="g125" gradientUnits="userSpaceOnUse" x1="262.4" y1="338.1" x2="342.2" y2="251.1"><stop offset="0" stop-color="#eeefef"/><stop offset="0.325" stop-color="#f9eaab"/><stop offset="0.65" stop-color="#fee25a"/><stop offset="0.85" stop-color="#ffdb1f"/><stop offset="1" stop-color="#ffd616"/></linearGradient><linearGradient id="g126" gradientUnits="userSpaceOnUse" x1="262.4" y1="338.1" x2="342.2" y2="251.1"><stop offset="0" stop-color="#eeefef"/><stop offset="0.325" stop-color="#fae9ab"/><stop offset="0.65" stop-color="#fede5a"/><stop offset="0.85" stop-color="#ffd51f"/><stop offset="0.975" stop-color="#ffd117"/><stop offset="1" stop-color="#ffd016"/></linearGradient><linearGradient id="g127" gradientUnits="userSpaceOnUse" x1="262.4" y1="338.1" x2="342.2" y2="251.1"><stop offset="0" stop-color="#eeefef"/><stop offset="0.325" stop-color="#fbe7ab"/><stop offset="0.65" stop-color="#ffda5a"/><stop offset="0.85" stop-color="#ffd01f"/><stop offset="0.95" stop-color="#ffcc18"/><stop offset="1" stop-color="#ffca16"/></linearGradient><linearGradient id="g128" gradientUnits="userSpaceOnUse" x1="262.4" y1="338.1" x2="342.2" y2="251.1"><stop offset="0" stop-color="#eeefef"/><stop offset="0.3" stop-color="#fbe7b0"/><stop offset="0.65" stop-color="#ffd65a"/><stop offset="0.85" stop-color="#ffcb20"/><stop offset="0.925" stop-color="#ffc819"/><stop offset="1" stop-color="#ffc416"/></linearGradient><linearGradient id="g129" gradientUnits="userSpaceOnUse" x1="262.4" y1="338.1" x2="342.2" y2="251.1"><stop offset="0" stop-color="#eeefef"/><stop offset="0.275" stop-color="#fbe6b6"/><stop offset="0.65" stop-color="#ffd259"/><stop offset="0.85" stop-color="#ffc620"/><stop offset="0.9" stop-color="#ffc41a"/><stop offset="1" stop-color="#ffbf16"/></linearGradient><linearGradient id="g130" gradientUnits="userSpaceOnUse" x1="262.4" y1="338.1" x2="342.2" y2="251.1"><stop offset="0" stop-color="#eeefef"/><stop offset="0.275" stop-color="#fce5b5"/><stop offset="0.65" stop-color="#ffce59"/><stop offset="0.85" stop-color="#ffc120"/><stop offset="0.9" stop-color="#ffbf1a"/><stop offset="1" stop-color="#ffba16"/></linearGradient><linearGradient id="g131" gradientUnits="userSpaceOnUse" x1="262.4" y1="338.1" x2="342.2" y2="251.1"><stop offset="0" stop-color="#eeefef"/><stop offset="0.25" stop-color="#fce5bb"/><stop offset="0.675" stop-color="#ffc852"/><stop offset="0.875" stop-color="#ffbc1b"/><stop offset="1" stop-color="#ffb516"/></linearGradient><linearGradient id="g132" gradientUnits="userSpaceOnUse" x1="262.4" y1="338.1" x2="342.2" y2="251.1"><stop offset="0" stop-color="#eeefef"/><stop offset="0.225" stop-color="#fbe5c0"/><stop offset="0.675" stop-color="#ffc451"/><stop offset="0.875" stop-color="#ffb71b"/><stop offset="1" stop-color="#ffb016"/></linearGradient><linearGradient id="g133" gradientUnits="userSpaceOnUse" x1="262.4" y1="338.1" x2="342.2" y2="251.1"><stop offset="0" stop-color="#eeefef"/><stop offset="0.225" stop-color="#fce4c0"/><stop offset="0.7" stop-color="#ffbe4a"/><stop offset="0.875" stop-color="#ffb21b"/><stop offset="1" stop-color="#ffab16"/></linearGradient><linearGradient id="g134" gradientUnits="userSpaceOnUse" x1="262.4" y1="338.1" x2="342.2" y2="251.1"><stop offset="0" stop-color="#eeefef"/><stop offset="0.2" stop-color="#fce4c5"/><stop offset="0.7" stop-color="#ffba4a"/><stop offset="0.875" stop-color="#ffae1b"/><stop offset="1" stop-color="#ffa615"/></linearGradient><linearGradient id="g135" gradientUnits="userSpaceOnUse" x1="262.4" y1="338.1" x2="342.2" y2="251.1"><stop offset="0" stop-color="#eeefef"/><stop offset="0.2" stop-color="#fce3c5"/><stop offset="0.725" stop-color="#ffb443"/><stop offset="0.875" stop-color="#ffa91b"/><stop offset="1" stop-color="#ffa115"/></linearGradient><linearGradient id="g136" gradientUnits="userSpaceOnUse" x1="262.4" y1="338.1" x2="342.2" y2="251.1"><stop offset="0" stop-color="#eeefef"/><stop offset="0.175" stop-color="#fce4ca"/><stop offset="0.725" stop-color="#ffb042"/><stop offset="0.875" stop-color="#ffa41c"/><stop offset="1" stop-color="#ff9c15"/></linearGradient><linearGradient id="g137" gradientUnits="userSpaceOnUse" x1="262.4" y1="338.1" x2="342.2" y2="251.1"><stop offset="0" stop-color="#eeefef"/><stop offset="0.175" stop-color="#fce3ca"/><stop offset="0.75" stop-color="#ffaa3b"/><stop offset="0.875" stop-color="#ffa01c"/><stop offset="1" stop-color="#ff9715"/></linearGradient><linearGradient id="g138" gradientUnits="userSpaceOnUse" x1="262.4" y1="338.1" x2="342.2" y2="251.1"><stop offset="0" stop-color="#eeefef"/><stop offset="0.175" stop-color="#fce2ca"/><stop offset="0.7" stop-color="#ffaa49"/><stop offset="0.875" stop-color="#ff9c1c"/><stop offset="1" stop-color="#ff9315"/></linearGradient><linearGradient id="g139" gradientUnits="userSpaceOnUse" x1="262.4" y1="338.1" x2="342.1" y2="251.1"><stop offset="0" stop-color="#eeefef"/><stop offset="0.175" stop-color="#fde1c9"/><stop offset="0.65" stop-color="#ffab55"/><stop offset="0.875" stop-color="#ff981b"/><stop offset="1" stop-color="#ff8e14"/></linearGradient><linearGradient id="g140" gradientUnits="userSpaceOnUse" x1="262.4" y1="338.1" x2="342.1" y2="251.0"><stop offset="0" stop-color="#eeefef"/><stop offset="0.15" stop-color="#fce3cf"/><stop offset="0.625" stop-color="#ffaa5b"/><stop offset="0.875" stop-color="#ff941b"/><stop offset="1" stop-color="#ff8a14"/></linearGradient><linearGradient id="g141" gradientUnits="userSpaceOnUse" x1="262.4" y1="338.1" x2="342.0" y2="251.0"><stop offset="0" stop-color="#eeefef"/><stop offset="0.15" stop-color="#fce2cf"/><stop offset="0.6" stop-color="#ffa961"/><stop offset="0.875" stop-color="#ff901b"/><stop offset="1" stop-color="#ff8614"/></linearGradient><linearGradient id="g142" gradientUnits="userSpaceOnUse" x1="262.4" y1="338.1" x2="342.0" y2="251.0"><stop offset="0" stop-color="#eeefef"/><stop offset="0.15" stop-color="#fde1ce"/><stop offset="0.575" stop-color="#ffa966"/><stop offset="0.9" stop-color="#ff8a17"/><stop offset="1" stop-color="#ff8213"/></linearGradient><linearGradient id="g143" gradientUnits="userSpaceOnUse" x1="262.4" y1="338.1" x2="341.9" y2="251.0"><stop offset="0" stop-color="#eeefef"/><stop offset="0.15" stop-color="#fde0ce"/><stop offset="0.55" stop-color="#ffa96b"/><stop offset="0.9" stop-color="#ff8617"/><stop offset="1" stop-color="#ff7e13"/></linearGradient><linearGradient id="g144" gradientUnits="userSpaceOnUse" x1="262.4" y1="338.1" x2="341.9" y2="251.0"><stop offset="0" stop-color="#eeefef"/><stop offset="0.125" stop-color="#fce3d4"/><stop offset="0.525" stop-color="#ffa970"/><stop offset="0.9" stop-color="#ff8217"/><stop offset="1" stop-color="#ff7a13"/></linearGradient><linearGradient id="g145" gradientUnits="userSpaceOnUse" x1="262.4" y1="338.1" x2="341.9" y2="251.0"><stop offset="0" stop-color="#eeefef"/><stop offset="0.125" stop-color="#fce2d4"/><stop offset="0.5" stop-color="#ffa976"/><stop offset="0.9" stop-color="#ff7e16"/><stop offset="1" stop-color="#ff7612"/></linearGradient><linearGradient id="g146" gradientUnits="userSpaceOnUse" x1="262.4" y1="338.1" x2="341.9" y2="251.0"><stop offset="0" stop-color="#eeefef"/><stop offset="0.125" stop-color="#fce1d4"/><stop offset="0.5" stop-color="#ffa775"/><stop offset="0.9" stop-color="#ff7b16"/><stop offset="1" stop-color="#ff7212"/></linearGradient><linearGradient id="g147" gradientUnits="userSpaceOnUse" x1="262.4" y1="338.1" x2="342.0" y2="251.0"><stop offset="0" stop-color="#eeefef"/><stop offset="0.125" stop-color="#fde1d3"/><stop offset="0.475" stop-color="#ffa77a"/><stop offset="0.9" stop-color="#ff7716"/><stop offset="1" stop-color="#ff6e11"/></linearGradient><linearGradient id="g148" gradientUnits="userSpaceOnUse" x1="262.4" y1="338.1" x2="342.1" y2="251.0"><stop offset="0" stop-color="#eeefef"/><stop offset="0.125" stop-color="#fde0d3"/><stop offset="0.45" stop-color="#ffa87f"/><stop offset="0.875" stop-color="#ff761b"/><stop offset="0.95" stop-color="#ff6f13"/><stop offset="1" stop-color="#ff6a11"/></linearGradient><linearGradient id="g149" gradientUnits="userSpaceOnUse" x1="262.4" y1="338.1" x2="342.3" y2="251.1"><stop offset="0" stop-color="#eeefef"/><stop offset="0.125" stop-color="#fddfd3"/><stop offset="0.425" stop-color="#ffaa84"/><stop offset="0.85" stop-color="#ff7521"/><stop offset="0.925" stop-color="#ff6e14"/><stop offset="1" stop-color="#ff6711"/></linearGradient><linearGradient id="g150" gradientUnits="userSpaceOnUse" x1="262.4" y1="338.1" x2="342.4" y2="251.1"><stop offset="0" stop-color="#eeefef"/><stop offset="0.125" stop-color="#fdded3"/><stop offset="0.425" stop-color="#ffa784"/><stop offset="0.825" stop-color="#ff7427"/><stop offset="0.9" stop-color="#ff6c15"/><stop offset="1" stop-color="#ff6310"/></linearGradient><linearGradient id="g151" gradientUnits="userSpaceOnUse" x1="262.4" y1="338.1" x2="342.5" y2="251.1"><stop offset="0" stop-color="#eeefef"/><stop offset="0.1" stop-color="#fce2d9"/><stop offset="0.4" stop-color="#ffa989"/><stop offset="0.8" stop-color="#ff732d"/><stop offset="0.9" stop-color="#ff6815"/><stop offset="1" stop-color="#ff5f10"/></linearGradient><linearGradient id="g152" gradientUnits="userSpaceOnUse" x1="262.4" y1="338.1" x2="342.5" y2="251.1"><stop offset="0" stop-color="#eeefef"/><stop offset="0.1" stop-color="#fce1d9"/><stop offset="0.375" stop-color="#ffaa8e"/><stop offset="0.75" stop-color="#ff7439"/><stop offset="0.9" stop-color="#ff6315"/><stop offset="1" stop-color="#ff590f"/></linearGradient><linearGradient id="g153" gradientUnits="userSpaceOnUse" x1="262.4" y1="338.1" x2="342.4" y2="251.1"><stop offset="0" stop-color="#eeefef"/><stop offset="0.1" stop-color="#fde0d8"/><stop offset="0.375" stop-color="#ffa58c"/><stop offset="0.75" stop-color="#ff6d38"/><stop offset="0.925" stop-color="#ff5911"/><stop offset="1" stop-color="#ff510e"/></linearGradient><linearGradient id="g154" gradientUnits="userSpaceOnUse" x1="262.4" y1="338.1" x2="342.2" y2="251.1"><stop offset="0" stop-color="#eeefef"/><stop offset="0.1" stop-color="#fddfd8"/><stop offset="0.35" stop-color="#ffa691"/><stop offset="0.7" stop-color="#ff6e43"/><stop offset="0.925" stop-color="#ff5210"/><stop offset="1" stop-color="#ff490d"/></linearGradient><linearGradient id="g155" gradientUnits="userSpaceOnUse" x1="262.4" y1="338.1" x2="342.1" y2="251.1"><stop offset="0" stop-color="#eeefef"/><stop offset="0.1" stop-color="#feddd7"/><stop offset="0.325" stop-color="#ffa796"/><stop offset="0.65" stop-color="#ff6e4c"/><stop offset="0.925" stop-color="#ff4a0f"/><stop offset="1" stop-color="#ff410c"/></linearGradient><linearGradient id="g156" gradientUnits="userSpaceOnUse" x1="262.4" y1="338.1" x2="342.0" y2="251.1"><stop offset="0" stop-color="#eeefef"/><stop offset="0.1" stop-color="#fedcd7"/><stop offset="0.325" stop-color="#ffa395"/><stop offset="0.65" stop-color="#ff694b"/><stop offset="0.925" stop-color="#ff430f"/><stop offset="1" stop-color="#ff390b"/></linearGradient><linearGradient id="g157" gradientUnits="userSpaceOnUse" x1="262.4" y1="338.1" x2="342.1" y2="251.1"><stop offset="0" stop-color="#eeefef"/><stop offset="0.075" stop-color="#fce1de"/><stop offset="0.3" stop-color="#ffa59a"/><stop offset="0.6" stop-color="#ff6b55"/><stop offset="0.925" stop-color="#ff3b0e"/><stop offset="1" stop-color="#ff310a"/></linearGradient><linearGradient id="g158" gradientUnits="userSpaceOnUse" x1="262.4" y1="338.1" x2="342.1" y2="251.1"><stop offset="0" stop-color="#eeefef"/><stop offset="0.075" stop-color="#fde0dd"/><stop offset="0.3" stop-color="#ffa198"/><stop offset="0.6" stop-color="#ff6554"/><stop offset="0.925" stop-color="#ff320e"/><stop offset="1" stop-color="#ff2809"/></linearGradient><linearGradient id="g159" gradientUnits="userSpaceOnUse" x1="262.4" y1="338.1" x2="341.7" y2="251.1"><stop offset="0" stop-color="#eeefef"/><stop offset="0.075" stop-color="#fddfdd"/><stop offset="0.275" stop-color="#ffa39e"/><stop offset="0.55" stop-color="#ff685d"/><stop offset="0.95" stop-color="#ff260a"/><stop offset="1" stop-color="#ff1e08"/></linearGradient><linearGradient id="g160" gradientUnits="userSpaceOnUse" x1="262.4" y1="338.1" x2="341.3" y2="251.2"><stop offset="0" stop-color="#eeefef"/><stop offset="0.075" stop-color="#fddedc"/><stop offset="0.275" stop-color="#ffa09c"/><stop offset="0.55" stop-color="#ff625b"/><stop offset="0.95" stop-color="#ff1b09"/><stop offset="1" stop-color="#ff1107"/></linearGradient><linearGradient id="g161" gradientUnits="userSpaceOnUse" x1="262.4" y1="338.1" x2="342.0" y2="251.1"><stop offset="0" stop-color="#eeefef"/><stop offset="0.075" stop-color="#fddddc"/><stop offset="0.25" stop-color="#ffa3a2"/><stop offset="0.5" stop-color="#ff6765"/><stop offset="0.95" stop-color="#ff0d08"/><stop offset="0.975" stop-color="#ff0707"/><stop offset="1" stop-color="#ff0606"/></linearGradient><linearGradient id="g162" gradientUnits="userSpaceOnUse" x1="262.4" y1="338.1" x2="342.7" y2="250.9"><stop offset="0" stop-color="#eeefef"/><stop offset="0.075" stop-color="#fedbdb"/><stop offset="0.25" stop-color="#ff9fa0"/><stop offset="0.5" stop-color="#ff6063"/><stop offset="0.925" stop-color="#ff080d"/><stop offset="0.975" stop-color="#ff0606"/><stop offset="1" stop-color="#ff0505"/></linearGradient><linearGradient id="g163" gradientUnits="userSpaceOnUse" x1="262.4" y1="338.1" x2="342.1" y2="251.1"><stop offset="0" stop-color="#eeefef"/><stop offset="0.075" stop-color="#fedadb"/><stop offset="0.225" stop-color="#ffa2a6"/><stop offset="0.45" stop-color="#ff646c"/><stop offset="0.85" stop-color="#ff0a1d"/><stop offset="0.975" stop-color="#ff0505"/><stop offset="1" stop-color="#ff0404"/></linearGradient><linearGradient id="g164" gradientUnits="userSpaceOnUse" x1="262.4" y1="338.1" x2="342.1" y2="251.1"><stop offset="0" stop-color="#eeefef"/><stop offset="0.05" stop-color="#fbe1e3"/><stop offset="0.2" stop-color="#ffa7ac"/><stop offset="0.425" stop-color="#ff6470"/><stop offset="0.75" stop-color="#ff152f"/><stop offset="0.825" stop-color="#ff0921"/><stop offset="0.975" stop-color="#ff0404"/><stop offset="1" stop-color="#ff0303"/></linearGradient><linearGradient id="g165" gradientUnits="userSpaceOnUse" x1="262.4" y1="338.1" x2="342.0" y2="251.1"><stop offset="0" stop-color="#eeefef"/><stop offset="0.05" stop-color="#fce0e2"/><stop offset="0.2" stop-color="#ffa2aa"/><stop offset="0.4" stop-color="#ff6373"/><stop offset="0.675" stop-color="#ff1b3b"/><stop offset="0.775" stop-color="#ff0a29"/><stop offset="0.975" stop-color="#ff0203"/><stop offset="1" stop-color="#ff0202"/></linearGradient><linearGradient id="g166" gradientUnits="userSpaceOnUse" x1="262.4" y1="338.1" x2="465.8" y2="290.9"><stop offset="0" stop-color="#eeefef"/><stop offset="0.05" stop-color="#fcdfe2"/><stop offset="0.2" stop-color="#ff9ea9"/><stop offset="0.4" stop-color="#ff5d73"/><stop offset="0.625" stop-color="#ff1d44"/><stop offset="0.725" stop-color="#ff0b32"/><stop offset="0.975" stop-color="#ff0207"/><stop offset="1" stop-color="#ff0101"/></linearGradient><linearGradient id="g167" gradientUnits="userSpaceOnUse" x1="262.4" y1="338.1" x2="316.2" y2="464.0"><stop offset="0" stop-color="#eeefef"/><stop offset="0.05" stop-color="#fcdfe3"/><stop offset="0.2" stop-color="#ff9eab"/><stop offset="0.4" stop-color="#ff5c76"/><stop offset="0.6" stop-color="#ff214e"/><stop offset="0.725" stop-color="#ff0b39"/><stop offset="1" stop-color="#ff0210"/></linearGradient><linearGradient id="g168" gradientUnits="userSpaceOnUse" x1="262.4" y1="338.1" x2="316.2" y2="464.0"><stop offset="0" stop-color="#eeefef"/><stop offset="0.05" stop-color="#fce0e4"/><stop offset="0.225" stop-color="#ff97a8"/><stop offset="0.45" stop-color="#ff5072"/><stop offset="0.625" stop-color="#ff1e52"/><stop offset="0.725" stop-color="#ff0d42"/><stop offset="1" stop-color="#ff021e"/></linearGradient><linearGradient id="g169" gradientUnits="userSpaceOnUse" x1="262.4" y1="338.1" x2="316.2" y2="464.0"><stop offset="0" stop-color="#eeefef"/><stop offset="0.05" stop-color="#fbe0e4"/><stop offset="0.2" stop-color="#ffa2b2"/><stop offset="0.425" stop-color="#ff597d"/><stop offset="0.625" stop-color="#ff2059"/><stop offset="0.725" stop-color="#ff0e4a"/><stop offset="1" stop-color="#ff0328"/></linearGradient><linearGradient id="g170" gradientUnits="userSpaceOnUse" x1="262.4" y1="338.1" x2="316.2" y2="464.0"><stop offset="0" stop-color="#eeefef"/><stop offset="0.075" stop-color="#fed6dd"/><stop offset="0.225" stop-color="#ff9aae"/><stop offset="0.45" stop-color="#ff537c"/><stop offset="0.625" stop-color="#ff215e"/><stop offset="0.725" stop-color="#ff0f50"/><stop offset="1" stop-color="#ff0430"/></linearGradient><linearGradient id="g171" gradientUnits="userSpaceOnUse" x1="262.4" y1="338.1" x2="316.2" y2="464.0"><stop offset="0" stop-color="#eeefef"/><stop offset="0.075" stop-color="#fed7df"/><stop offset="0.25" stop-color="#ff93ab"/><stop offset="0.5" stop-color="#ff4678"/><stop offset="0.65" stop-color="#ff1e60"/><stop offset="0.75" stop-color="#ff0e53"/><stop offset="1" stop-color="#ff0537"/></linearGradient><linearGradient id="g172" gradientUnits="userSpaceOnUse" x1="262.4" y1="338.1" x2="316.2" y2="464.0"><stop offset="0" stop-color="#eeefef"/><stop offset="0.075" stop-color="#fed8e0"/><stop offset="0.25" stop-color="#ff94ae"/><stop offset="0.5" stop-color="#ff487d"/><stop offset="0.65" stop-color="#ff1f66"/><stop offset="0.725" stop-color="#ff125c"/><stop offset="1" stop-color="#ff053e"/></linearGradient><linearGradient id="g173" gradientUnits="userSpaceOnUse" x1="262.4" y1="338.1" x2="316.2" y2="464.0"><stop offset="0" stop-color="#eeefef"/><stop offset="0.075" stop-color="#fdd8e1"/><stop offset="0.25" stop-color="#ff95b1"/><stop offset="0.5" stop-color="#ff4982"/><stop offset="0.65" stop-color="#ff206c"/><stop offset="0.75" stop-color="#ff115f"/><stop offset="1" stop-color="#ff0646"/></linearGradient><linearGradient id="g174" gradientUnits="userSpaceOnUse" x1="262.4" y1="338.1" x2="316.2" y2="464.0"><stop offset="0" stop-color="#eeefef"/><stop offset="0.075" stop-color="#fdd9e2"/><stop offset="0.25" stop-color="#ff97b4"/><stop offset="0.525" stop-color="#ff4383"/><stop offset="0.675" stop-color="#ff1c6e"/><stop offset="0.75" stop-color="#ff1266"/><stop offset="1" stop-color="#ff074d"/></linearGradient><linearGradient id="g175" gradientUnits="userSpaceOnUse" x1="262.4" y1="338.1" x2="316.2" y2="464.0"><stop offset="0" stop-color="#eeefef"/><stop offset="0.075" stop-color="#fdd9e3"/><stop offset="0.275" stop-color="#ff90b2"/><stop offset="0.55" stop-color="#ff3d83"/><stop offset="0.675" stop-color="#ff1e73"/><stop offset="0.75" stop-color="#ff126a"/><stop offset="1" stop-color="#ff0852"/></linearGradient><linearGradient id="g176" gradientUnits="userSpaceOnUse" x1="262.4" y1="338.1" x2="316.2" y2="464.0"><stop offset="0" stop-color="#eeefef"/><stop offset="0.075" stop-color="#fdd9e4"/><stop offset="0.275" stop-color="#ff90b3"/><stop offset="0.55" stop-color="#ff3e86"/><stop offset="0.675" stop-color="#ff1e76"/><stop offset="0.75" stop-color="#ff136d"/><stop offset="1" stop-color="#ff0856"/></linearGradient><linearGradient id="g177" gradientUnits="userSpaceOnUse" x1="262.4" y1="338.1" x2="316.2" y2="464.0"><stop offset="0" stop-color="#eeefef"/><stop offset="0.075" stop-color="#fddae4"/><stop offset="0.275" stop-color="#ff91b5"/><stop offset="0.575" stop-color="#ff3785"/><stop offset="0.7" stop-color="#ff1a76"/><stop offset="0.825" stop-color="#ff1069"/><stop offset="1" stop-color="#ff0959"/></linearGradient><linearGradient id="g178" gradientUnits="userSpaceOnUse" x1="262.4" y1="338.1" x2="316.2" y2="464.0"><stop offset="0" stop-color="#eeefef"/><stop offset="0.075" stop-color="#fddae5"/><stop offset="0.275" stop-color="#ff92b7"/><stop offset="0.575" stop-color="#ff3888"/><stop offset="0.7" stop-color="#ff1a79"/><stop offset="0.8" stop-color="#ff116e"/><stop offset="1" stop-color="#ff095d"/></linearGradient><linearGradient id="g179" gradientUnits="userSpaceOnUse" x1="262.4" y1="338.1" x2="316.2" y2="464.0"><stop offset="0" stop-color="#eeefef"/><stop offset="0.075" stop-color="#fcdae5"/><stop offset="0.3" stop-color="#ff8bb4"/><stop offset="0.6" stop-color="#ff3187"/><stop offset="0.725" stop-color="#ff1779"/><stop offset="1" stop-color="#ff0a60"/></linearGradient><linearGradient id="g180" gradientUnits="userSpaceOnUse" x1="262.4" y1="338.1" x2="316.2" y2="464.0"><stop offset="0" stop-color="#eeefef"/><stop offset="0.075" stop-color="#fcdae6"/><stop offset="0.3" stop-color="#ff8cb6"/><stop offset="0.625" stop-color="#ff2b87"/><stop offset="0.75" stop-color="#ff157a"/><stop offset="1" stop-color="#ff0a64"/></linearGradient><linearGradient id="g181" gradientUnits="userSpaceOnUse" x1="262.4" y1="338.1" x2="316.2" y2="464.0"><stop offset="0" stop-color="#eeefef"/><stop offset="0.1" stop-color="#fdd1e1"/><stop offset="0.325" stop-color="#ff85b3"/><stop offset="0.625" stop-color="#ff2c8a"/><stop offset="0.75" stop-color="#ff157d"/><stop offset="1" stop-color="#ff0a68"/></linearGradient><linearGradient id="g182" gradientUnits="userSpaceOnUse" x1="262.4" y1="338.1" x2="316.2" y2="464.0"><stop offset="0" stop-color="#eeefef"/><stop offset="0.1" stop-color="#fdd2e2"/><stop offset="0.325" stop-color="#ff86b5"/><stop offset="0.625" stop-color="#ff2d8d"/><stop offset="0.75" stop-color="#ff1680"/><stop offset="1" stop-color="#ff0b6b"/></linearGradient><linearGradient id="g183" gradientUnits="userSpaceOnUse" x1="262.4" y1="338.1" x2="316.2" y2="464.0"><stop offset="0" stop-color="#eeefef"/><stop offset="0.1" stop-color="#fdd2e2"/><stop offset="0.325" stop-color="#ff86b7"/><stop offset="0.65" stop-color="#ff288d"/><stop offset="0.75" stop-color="#ff1683"/><stop offset="1" stop-color="#ff0b6f"/></linearGradient><linearGradient id="g184" gradientUnits="userSpaceOnUse" x1="262.4" y1="338.1" x2="316.2" y2="464.0"><stop offset="0" stop-color="#eeefef"/><stop offset="0.1" stop-color="#fdd2e3"/><stop offset="0.35" stop-color="#ff80b6"/><stop offset="0.65" stop-color="#ff2990"/><stop offset="0.75" stop-color="#ff1787"/><stop offset="1" stop-color="#ff0c72"/></linearGradient><linearGradient id="g185" gradientUnits="userSpaceOnUse" x1="262.4" y1="338.1" x2="316.2" y2="464.0"><stop offset="0" stop-color="#eeefef"/><stop offset="0.1" stop-color="#fdd3e4"/><stop offset="0.35" stop-color="#ff80b8"/><stop offset="0.65" stop-color="#ff2a93"/><stop offset="0.75" stop-color="#ff178a"/><stop offset="1" stop-color="#ff0c76"/></linearGradient><linearGradient id="g186" gradientUnits="userSpaceOnUse" x1="262.4" y1="338.1" x2="316.2" y2="464.0"><stop offset="0" stop-color="#eeefef"/><stop offset="0.1" stop-color="#fdd3e5"/><stop offset="0.35" stop-color="#ff81ba"/><stop offset="0.65" stop-color="#ff2a97"/><stop offset="0.75" stop-color="#ff188d"/><stop offset="1" stop-color="#ff0c7a"/></linearGradient><linearGradient id="g187" gradientUnits="userSpaceOnUse" x1="262.4" y1="338.1" x2="316.2" y2="464.0"><stop offset="0" stop-color="#eeefef"/><stop offset="0.1" stop-color="#fdd3e5"/><stop offset="0.375" stop-color="#ff7bb9"/><stop offset="0.65" stop-color="#ff2b9a"/><stop offset="0.75" stop-color="#ff1890"/><stop offset="1" stop-color="#ff0d7e"/></linearGradient><linearGradient id="g188" gradientUnits="userSpaceOnUse" x1="262.4" y1="338.1" x2="316.2" y2="464.0"><stop offset="0" stop-color="#eeefef"/><stop offset="0.1" stop-color="#fdd4e6"/><stop offset="0.375" stop-color="#ff7bbb"/><stop offset="0.65" stop-color="#ff2b9d"/><stop offset="0.75" stop-color="#ff1894"/><stop offset="1" stop-color="#ff0d81"/></linearGradient><linearGradient id="g189" gradientUnits="userSpaceOnUse" x1="262.4" y1="338.1" x2="316.2" y2="464.0"><stop offset="0" stop-color="#eeefef"/><stop offset="0.1" stop-color="#fcd4e7"/><stop offset="0.4" stop-color="#ff75ba"/><stop offset="0.65" stop-color="#ff2ca0"/><stop offset="0.75" stop-color="#ff1997"/><stop offset="1" stop-color="#ff0d85"/></linearGradient><linearGradient id="g190" gradientUnits="userSpaceOnUse" x1="262.4" y1="338.1" x2="316.2" y2="464.0"><stop offset="0" stop-color="#eeefef"/><stop offset="0.1" stop-color="#fcd4e7"/><stop offset="0.425" stop-color="#ff6eba"/><stop offset="0.65" stop-color="#ff2da3"/><stop offset="0.75" stop-color="#ff199b"/><stop offset="1" stop-color="#ff0e89"/></linearGradient><linearGradient id="g191" gradientUnits="userSpaceOnUse" x1="262.4" y1="338.1" x2="316.2" y2="464.0"><stop offset="0" stop-color="#eeefef"/><stop offset="0.125" stop-color="#fdcce5"/><stop offset="0.475" stop-color="#ff61b7"/><stop offset="0.65" stop-color="#ff2da6"/><stop offset="0.75" stop-color="#ff199e"/><stop offset="1" stop-color="#ff0e8d"/></linearGradient><linearGradient id="g192" gradientUnits="userSpaceOnUse" x1="262.4" y1="338.1" x2="316.2" y2="464.0"><stop offset="0" stop-color="#eeefef"/><stop offset="0.125" stop-color="#fdcde6"/><stop offset="0.5" stop-color="#ff5ab7"/><stop offset="0.65" stop-color="#ff2ea9"/><stop offset="0.75" stop-color="#ff1aa1"/><stop offset="1" stop-color="#ff0e91"/></linearGradient><linearGradient id="g193" gradientUnits="userSpaceOnUse" x1="262.4" y1="338.1" x2="316.2" y2="464.0"><stop offset="0" stop-color="#eeefef"/><stop offset="0.125" stop-color="#fdcde6"/><stop offset="0.5" stop-color="#ff5bba"/><stop offset="0.65" stop-color="#ff2ead"/><stop offset="0.75" stop-color="#ff1aa5"/><stop offset="1" stop-color="#ff0e95"/></linearGradient><linearGradient id="g194" gradientUnits="userSpaceOnUse" x1="262.4" y1="338.1" x2="316.2" y2="464.0"><stop offset="0" stop-color="#eeefef"/><stop offset="0.125" stop-color="#fccde7"/><stop offset="0.525" stop-color="#ff54ba"/><stop offset="0.675" stop-color="#ff29ae"/><stop offset="0.75" stop-color="#ff1aa9"/><stop offset="1" stop-color="#ff0f99"/></linearGradient><linearGradient id="g195" gradientUnits="userSpaceOnUse" x1="262.4" y1="338.1" x2="316.2" y2="464.0"><stop offset="0" stop-color="#eeefef"/><stop offset="0.125" stop-color="#fccee8"/><stop offset="0.55" stop-color="#ff4cbb"/><stop offset="0.7" stop-color="#ff23b0"/><stop offset="0.775" stop-color="#ff19aa"/><stop offset="1" stop-color="#ff0f9d"/></linearGradient><linearGradient id="g196" gradientUnits="userSpaceOnUse" x1="262.4" y1="338.1" x2="316.2" y2="464.0"><stop offset="0" stop-color="#eeefef"/><stop offset="0.125" stop-color="#fccee9"/><stop offset="0.6" stop-color="#ff3dbb"/><stop offset="0.725" stop-color="#ff1eb2"/><stop offset="0.95" stop-color="#ff11a4"/><stop offset="1" stop-color="#ff0fa1"/></linearGradient><linearGradient id="g197" gradientUnits="userSpaceOnUse" x1="262.4" y1="338.1" x2="316.2" y2="464.0"><stop offset="0" stop-color="#eeefef"/><stop offset="0.125" stop-color="#fbcee9"/><stop offset="0.625" stop-color="#ff37bc"/><stop offset="0.75" stop-color="#ff1bb4"/><stop offset="1" stop-color="#ff0fa6"/></linearGradient><linearGradient id="g198" gradientUnits="userSpaceOnUse" x1="262.4" y1="338.1" x2="316.2" y2="464.0"><stop offset="0" stop-color="#eeefef"/><stop offset="0.125" stop-color="#fbceea"/><stop offset="0.675" stop-color="#ff2bbc"/><stop offset="0.75" stop-color="#ff1bb7"/><stop offset="1" stop-color="#ff0faa"/></linearGradient><linearGradient id="g199" gradientUnits="userSpaceOnUse" x1="262.4" y1="338.1" x2="316.2" y2="464.0"><stop offset="0" stop-color="#eeefef"/><stop offset="0.125" stop-color="#fbcfeb"/><stop offset="0.65" stop-color="#ff31c1"/><stop offset="0.75" stop-color="#ff1bbb"/><stop offset="1" stop-color="#ff0fae"/></linearGradient><linearGradient id="g200" gradientUnits="userSpaceOnUse" x1="262.4" y1="338.1" x2="316.2" y2="464.0"><stop offset="0" stop-color="#eeefef"/><stop offset="0.125" stop-color="#facfec"/><stop offset="0.65" stop-color="#ff31c5"/><stop offset="0.75" stop-color="#ff1bbf"/><stop offset="1" stop-color="#ff0fb3"/></linearGradient><linearGradient id="g201" gradientUnits="userSpaceOnUse" x1="262.4" y1="338.1" x2="316.2" y2="464.0"><stop offset="0" stop-color="#eeefef"/><stop offset="0.125" stop-color="#facfec"/><stop offset="0.675" stop-color="#ff2cc7"/><stop offset="0.75" stop-color="#ff1bc3"/><stop offset="1" stop-color="#ff0fb8"/></linearGradient><linearGradient id="g202" gradientUnits="userSpaceOnUse" x1="262.4" y1="338.1" x2="316.2" y2="464.0"><stop offset="0" stop-color="#eeefef"/><stop offset="0.125" stop-color="#facfed"/><stop offset="0.575" stop-color="#ff49d1"/><stop offset="0.725" stop-color="#ff20c9"/><stop offset="0.825" stop-color="#ff17c4"/><stop offset="1" stop-color="#ff0fbc"/></linearGradient><linearGradient id="g203" gradientUnits="userSpaceOnUse" x1="262.4" y1="338.1" x2="316.2" y2="464.0"><stop offset="0" stop-color="#eeefef"/><stop offset="0.125" stop-color="#f9d0ee"/><stop offset="0.55" stop-color="#ff52d6"/><stop offset="0.7" stop-color="#ff26ce"/><stop offset="0.775" stop-color="#ff19ca"/><stop offset="1" stop-color="#ff0fc1"/></linearGradient><linearGradient id="g204" gradientUnits="userSpaceOnUse" x1="262.4" y1="338.1" x2="316.2" y2="464.0"><stop offset="0" stop-color="#eeefef"/><stop offset="0.15" stop-color="#fac9ed"/><stop offset="0.55" stop-color="#ff52d9"/><stop offset="0.7" stop-color="#ff26d2"/><stop offset="0.775" stop-color="#ff19cf"/><stop offset="1" stop-color="#ff0fc6"/></linearGradient><linearGradient id="g205" gradientUnits="userSpaceOnUse" x1="262.4" y1="338.1" x2="316.2" y2="464.0"><stop offset="0" stop-color="#eeefef"/><stop offset="0.15" stop-color="#f9c9ee"/><stop offset="0.55" stop-color="#ff53dd"/><stop offset="0.7" stop-color="#ff27d6"/><stop offset="0.775" stop-color="#ff19d3"/><stop offset="1" stop-color="#ff0fcb"/></linearGradient><linearGradient id="g206" gradientUnits="userSpaceOnUse" x1="262.4" y1="338.1" x2="316.2" y2="464.0"><stop offset="0" stop-color="#eeefef"/><stop offset="0.15" stop-color="#f9c9ef"/><stop offset="0.525" stop-color="#fe5ce1"/><stop offset="0.675" stop-color="#ff2edc"/><stop offset="0.75" stop-color="#ff1cd9"/><stop offset="1" stop-color="#ff0fd1"/></linearGradient><linearGradient id="g207" gradientUnits="userSpaceOnUse" x1="262.4" y1="338.1" x2="316.2" y2="464.0"><stop offset="0" stop-color="#eeefef"/><stop offset="0.15" stop-color="#f8caf0"/><stop offset="0.525" stop-color="#fe5de4"/><stop offset="0.675" stop-color="#ff2ee0"/><stop offset="0.75" stop-color="#ff1cdd"/><stop offset="1" stop-color="#ff0fd6"/></linearGradient><linearGradient id="g208" gradientUnits="userSpaceOnUse" x1="262.4" y1="338.1" x2="316.2" y2="464.0"><stop offset="0" stop-color="#eeefef"/><stop offset="0.15" stop-color="#f8caf1"/><stop offset="0.525" stop-color="#fe5de8"/><stop offset="0.675" stop-color="#fe2ee4"/><stop offset="0.75" stop-color="#ff1ce2"/><stop offset="1" stop-color="#ff0fdc"/></linearGradient><linearGradient id="g209" gradientUnits="userSpaceOnUse" x1="262.4" y1="338.1" x2="316.2" y2="464.0"><stop offset="0" stop-color="#eeefef"/><stop offset="0.15" stop-color="#f7caf2"/><stop offset="0.525" stop-color="#fd5eeb"/><stop offset="0.675" stop-color="#fe2ee8"/><stop offset="0.775" stop-color="#ff18e6"/><stop offset="1" stop-color="#ff0ee1"/></linearGradient><linearGradient id="g210" gradientUnits="userSpaceOnUse" x1="262.4" y1="338.1" x2="316.2" y2="464.0"><stop offset="0" stop-color="#eeefef"/><stop offset="0.175" stop-color="#f7c3f2"/><stop offset="0.525" stop-color="#fc5eee"/><stop offset="0.675" stop-color="#fd2eec"/><stop offset="0.75" stop-color="#fe1beb"/><stop offset="1" stop-color="#ff0ee7"/></linearGradient><linearGradient id="g211" gradientUnits="userSpaceOnUse" x1="262.4" y1="338.1" x2="316.2" y2="464.0"><stop offset="0" stop-color="#eeefef"/><stop offset="0.175" stop-color="#f7c4f3"/><stop offset="0.525" stop-color="#fa5ff0"/><stop offset="0.675" stop-color="#fc2eef"/><stop offset="0.75" stop-color="#fe1bf0"/><stop offset="1" stop-color="#ff0eed"/></linearGradient><linearGradient id="g212" gradientUnits="userSpaceOnUse" x1="262.4" y1="338.1" x2="316.2" y2="464.0"><stop offset="0" stop-color="#eeefef"/><stop offset="0.175" stop-color="#f6c4f4"/><stop offset="0.525" stop-color="#f95ff3"/><stop offset="0.675" stop-color="#fa2ef2"/><stop offset="0.75" stop-color="#fc1bf4"/><stop offset="1" stop-color="#ff0ef4"/></linearGradient><linearGradient id="g213" gradientUnits="userSpaceOnUse" x1="262.4" y1="338.1" x2="316.2" y2="464.0"><stop offset="0" stop-color="#eeefef"/><stop offset="0.2" stop-color="#f6bdf5"/><stop offset="0.525" stop-color="#f85ff5"/><stop offset="0.675" stop-color="#f82ef6"/><stop offset="0.75" stop-color="#fa1bf7"/><stop offset="1" stop-color="#ff0dfa"/></linearGradient><linearGradient id="g214" gradientUnits="userSpaceOnUse" x1="262.4" y1="338.1" x2="316.2" y2="464.0"><stop offset="0" stop-color="#eeefef"/><stop offset="0.2" stop-color="#f5bdf6"/><stop offset="0.525" stop-color="#f65ff8"/><stop offset="0.675" stop-color="#f62ef8"/><stop offset="0.75" stop-color="#f81bfa"/><stop offset="1" stop-color="#fd0dff"/></linearGradient><linearGradient id="g215" gradientUnits="userSpaceOnUse" x1="262.4" y1="338.1" x2="316.2" y2="464.0"><stop offset="0" stop-color="#eeefef"/><stop offset="0.2" stop-color="#f4bdf7"/><stop offset="0.525" stop-color="#f35ff9"/><stop offset="0.675" stop-color="#f32efa"/><stop offset="0.75" stop-color="#f41bfc"/><stop offset="0.975" stop-color="#f60eff"/><stop offset="1" stop-color="#f60dff"/></linearGradient><linearGradient id="g216" gradientUnits="userSpaceOnUse" x1="262.4" y1="338.1" x2="316.2" y2="464.0"><stop offset="0" stop-color="#eeefef"/><stop offset="0.2" stop-color="#f3bdf8"/><stop offset="0.55" stop-color="#f057fa"/><stop offset="0.725" stop-color="#f020fd"/><stop offset="0.8" stop-color="#f115fe"/><stop offset="1" stop-color="#ef0cff"/></linearGradient><linearGradient id="g217" gradientUnits="userSpaceOnUse" x1="262.4" y1="338.1" x2="316.2" y2="464.0"><stop offset="0" stop-color="#eeefef"/><stop offset="0.175" stop-color="#f2c4f8"/><stop offset="0.525" stop-color="#ed5ffb"/><stop offset="0.7" stop-color="#ec27fe"/><stop offset="0.775" stop-color="#eb16fe"/><stop offset="1" stop-color="#e80cff"/></linearGradient><linearGradient id="g218" gradientUnits="userSpaceOnUse" x1="262.4" y1="338.1" x2="316.2" y2="464.0"><stop offset="0" stop-color="#eeefef"/><stop offset="0.175" stop-color="#f1c4f8"/><stop offset="0.55" stop-color="#ea56fd"/><stop offset="0.725" stop-color="#e71ffe"/><stop offset="0.8" stop-color="#e614ff"/><stop offset="1" stop-color="#e20cff"/></linearGradient><linearGradient id="g219" gradientUnits="userSpaceOnUse" x1="262.4" y1="338.1" x2="316.2" y2="464.0"><stop offset="0" stop-color="#eeefef"/><stop offset="0.175" stop-color="#efc4f9"/><stop offset="0.55" stop-color="#e656fe"/><stop offset="0.725" stop-color="#e21fff"/><stop offset="0.8" stop-color="#e014ff"/><stop offset="1" stop-color="#db0bff"/></linearGradient><linearGradient id="g220" gradientUnits="userSpaceOnUse" x1="262.4" y1="338.1" x2="316.2" y2="464.0"><stop offset="0" stop-color="#eeefef"/><stop offset="0.175" stop-color="#eec4f9"/><stop offset="0.55" stop-color="#e256fe"/><stop offset="0.725" stop-color="#dd1fff"/><stop offset="0.8" stop-color="#db13ff"/><stop offset="1" stop-color="#d50bff"/></linearGradient><linearGradient id="g221" gradientUnits="userSpaceOnUse" x1="262.4" y1="338.1" x2="316.2" y2="464.0"><stop offset="0" stop-color="#eeefef"/><stop offset="0.175" stop-color="#edc4fa"/><stop offset="0.55" stop-color="#de55fe"/><stop offset="0.725" stop-color="#d81fff"/><stop offset="0.8" stop-color="#d513ff"/><stop offset="1" stop-color="#cf0bff"/></linearGradient><linearGradient id="g222" gradientUnits="userSpaceOnUse" x1="262.4" y1="338.1" x2="316.2" y2="464.0"><stop offset="0" stop-color="#eeefef"/><stop offset="0.175" stop-color="#ecc4fa"/><stop offset="0.55" stop-color="#da55ff"/><stop offset="0.725" stop-color="#d31fff"/><stop offset="0.8" stop-color="#d012ff"/><stop offset="1" stop-color="#c90aff"/></linearGradient><linearGradient id="g223" gradientUnits="userSpaceOnUse" x1="262.4" y1="338.1" x2="316.2" y2="464.0"><stop offset="0" stop-color="#eeefef"/><stop offset="0.175" stop-color="#ebc4fb"/><stop offset="0.55" stop-color="#d754ff"/><stop offset="0.725" stop-color="#ce1eff"/><stop offset="0.8" stop-color="#ca12ff"/><stop offset="1" stop-color="#c20aff"/></linearGradient><linearGradient id="g224" gradientUnits="userSpaceOnUse" x1="262.4" y1="338.1" x2="316.2" y2="464.0"><stop offset="0" stop-color="#eeefef"/><stop offset="0.175" stop-color="#eac3fb"/><stop offset="0.55" stop-color="#d254ff"/><stop offset="0.725" stop-color="#c91eff"/><stop offset="0.8" stop-color="#c511ff"/><stop offset="1" stop-color="#bc09ff"/></linearGradient><linearGradient id="g225" gradientUnits="userSpaceOnUse" x1="262.4" y1="338.1" x2="316.2" y2="464.0"><stop offset="0" stop-color="#eeefef"/><stop offset="0.175" stop-color="#e9c3fc"/><stop offset="0.575" stop-color="#cd4bff"/><stop offset="0.725" stop-color="#c41eff"/><stop offset="0.8" stop-color="#c011ff"/><stop offset="1" stop-color="#b609ff"/></linearGradient><linearGradient id="g226" gradientUnits="userSpaceOnUse" x1="262.4" y1="338.1" x2="316.2" y2="464.0"><stop offset="0" stop-color="#eeefef"/><stop offset="0.175" stop-color="#e7c3fc"/><stop offset="0.575" stop-color="#c84aff"/><stop offset="0.725" stop-color="#bf1dff"/><stop offset="0.8" stop-color="#ba11ff"/><stop offset="1" stop-color="#b008ff"/></linearGradient><linearGradient id="g227" gradientUnits="userSpaceOnUse" x1="262.4" y1="338.1" x2="316.2" y2="464.0"><stop offset="0" stop-color="#eeefef"/><stop offset="0.175" stop-color="#e6c3fc"/><stop offset="0.6" stop-color="#c242ff"/><stop offset="0.75" stop-color="#b817ff"/><stop offset="0.85" stop-color="#b20eff"/><stop offset="1" stop-color="#aa08ff"/></linearGradient><linearGradient id="g228" gradientUnits="userSpaceOnUse" x1="262.4" y1="338.1" x2="316.2" y2="464.0"><stop offset="0" stop-color="#eeefef"/><stop offset="0.15" stop-color="#e7cafc"/><stop offset="0.6" stop-color="#be41ff"/><stop offset="0.75" stop-color="#b317ff"/><stop offset="0.85" stop-color="#ad0dff"/><stop offset="1" stop-color="#a407ff"/></linearGradient><linearGradient id="g229" gradientUnits="userSpaceOnUse" x1="262.4" y1="338.1" x2="316.2" y2="464.0"><stop offset="0" stop-color="#eeefef"/><stop offset="0.15" stop-color="#e6cafc"/><stop offset="0.625" stop-color="#b839ff"/><stop offset="0.75" stop-color="#ae16ff"/><stop offset="0.85" stop-color="#a70dff"/><stop offset="1" stop-color="#9f07ff"/></linearGradient><linearGradient id="g230" gradientUnits="userSpaceOnUse" x1="262.4" y1="338.1" x2="316.2" y2="464.0"><stop offset="0" stop-color="#eeefef"/><stop offset="0.15" stop-color="#e5cafd"/><stop offset="0.65" stop-color="#b130ff"/><stop offset="0.775" stop-color="#a711ff"/><stop offset="1" stop-color="#9907ff"/></linearGradient><linearGradient id="g231" gradientUnits="userSpaceOnUse" x1="262.4" y1="338.1" x2="316.2" y2="464.0"><stop offset="0" stop-color="#eeefef"/><stop offset="0.15" stop-color="#e3c9fd"/><stop offset="0.6" stop-color="#af40ff"/><stop offset="0.75" stop-color="#a215ff"/><stop offset="0.825" stop-color="#9c0dff"/><stop offset="1" stop-color="#9006ff"/></linearGradient><linearGradient id="g232" gradientUnits="userSpaceOnUse" x1="262.4" y1="338.1" x2="316.2" y2="464.0"><stop offset="0" stop-color="#eeefef"/><stop offset="0.125" stop-color="#e4d1fd"/><stop offset="0.55" stop-color="#ac4fff"/><stop offset="0.725" stop-color="#9a1bff"/><stop offset="0.8" stop-color="#940dff"/><stop offset="1" stop-color="#8405ff"/></linearGradient><linearGradient id="g233" gradientUnits="userSpaceOnUse" x1="262.4" y1="338.1" x2="316.2" y2="464.0"><stop offset="0" stop-color="#eeefef"/><stop offset="0.125" stop-color="#e3d0fd"/><stop offset="0.525" stop-color="#a756ff"/><stop offset="0.7" stop-color="#9320ff"/><stop offset="0.8" stop-color="#890cff"/><stop offset="1" stop-color="#7904ff"/></linearGradient><linearGradient id="g234" gradientUnits="userSpaceOnUse" x1="262.4" y1="338.1" x2="316.2" y2="464.0"><stop offset="0" stop-color="#eeefef"/><stop offset="0.125" stop-color="#e0d0fd"/><stop offset="0.475" stop-color="#a664ff"/><stop offset="0.7" stop-color="#8a20ff"/><stop offset="0.8" stop-color="#7f0bff"/><stop offset="1" stop-color="#6d04ff"/></linearGradient><linearGradient id="g235" gradientUnits="userSpaceOnUse" x1="262.4" y1="338.1" x2="316.2" y2="464.0"><stop offset="0" stop-color="#eeefef"/><stop offset="0.1" stop-color="#e3d7fd"/><stop offset="0.45" stop-color="#a36aff"/><stop offset="0.725" stop-color="#7d18ff"/><stop offset="0.8" stop-color="#750aff"/><stop offset="1" stop-color="#6203ff"/></linearGradient><linearGradient id="g236" gradientUnits="userSpaceOnUse" x1="262.4" y1="338.1" x2="316.2" y2="464.0"><stop offset="0" stop-color="#eeefef"/><stop offset="0.1" stop-color="#e2d7fd"/><stop offset="0.425" stop-color="#a070ff"/><stop offset="0.725" stop-color="#7318ff"/><stop offset="0.8" stop-color="#6b09ff"/><stop offset="1" stop-color="#5602ff"/></linearGradient><linearGradient id="g237" gradientUnits="userSpaceOnUse" x1="262.4" y1="338.1" x2="316.2" y2="464.0"><stop offset="0" stop-color="#eeefef"/><stop offset="0.1" stop-color="#e0d6fd"/><stop offset="0.4" stop-color="#9e76ff"/><stop offset="0.725" stop-color="#6a17ff"/><stop offset="0.8" stop-color="#6008ff"/><stop offset="1" stop-color="#4a02ff"/></linearGradient><linearGradient id="g238" gradientUnits="userSpaceOnUse" x1="262.4" y1="338.1" x2="316.2" y2="464.0"><stop offset="0" stop-color="#eeefef"/><stop offset="0.1" stop-color="#dfd6fe"/><stop offset="0.4" stop-color="#9976ff"/><stop offset="0.725" stop-color="#6217ff"/><stop offset="0.8" stop-color="#5808ff"/><stop offset="1" stop-color="#4101ff"/></linearGradient></defs><g shape-rendering="crispEdges"><polygon points="262.4,338.1 164.6,528.7 161.0,530.3 160.8,530.3 160.5,530.4 160.1,530.4 159.4,530.2 157.9,529.2 155.2,527.1 150.6,523.4" fill="url(#g0)"/><polygon points="262.4,338.1 157.9,529.2 155.2,527.1 150.6,523.4 148.2,521.4" fill="url(#g1)"/><polygon points="262.4,338.1 155.2,527.1 150.6,523.4 148.2,521.4 145.6,519.1 143.2,516.9" fill="url(#g2)"/><polygon points="262.4,338.1 148.2,521.4 145.6,519.1 143.2,516.9 140.6,514.3 138.1,511.3" fill="url(#g3)"/><polygon points="262.4,338.1 143.2,516.9 140.6,514.3 138.1,511.3 136.1,508.6 133.8,505.4" fill="url(#g4)"/><polygon points="262.4,338.1 138.1,511.3 136.1,508.6 133.8,505.4 131.4,501.6" fill="url(#g5)"/><polygon points="262.4,338.1 136.1,508.6 133.8,505.4 131.4,501.6 129.8,499.0 128.2,496.1" fill="url(#g6)"/><polygon points="262.4,338.1 131.4,501.6 129.8,499.0 128.2,496.1 126.5,493.1 124.7,489.6" fill="url(#g7)"/><polygon points="262.4,338.1 128.2,496.1 126.5,493.1 124.7,489.6 122.8,485.8" fill="url(#g8)"/><polygon points="262.4,338.1 126.5,493.1 124.7,489.6 122.8,485.8 121.7,483.5 120.6,481.1" fill="url(#g9)"/><polygon points="262.4,338.1 122.8,485.8 121.7,483.5 120.6,481.1 119.5,478.6 118.3,476.0" fill="url(#g10)"/><polygon points="262.4,338.1 120.6,481.1 119.5,478.6 118.3,476.0 117.1,473.3 115.9,470.4" fill="url(#g11)"/><polygon points="262.4,338.1 118.3,476.0 117.1,473.3 115.9,470.4 114.6,467.4 113.3,464.2" fill="url(#g12)"/><polygon points="262.4,338.1 115.9,470.4 114.6,467.4 113.3,464.2 112.0,460.8 111.1,458.4" fill="url(#g13)"/><polygon points="262.4,338.1 113.3,464.2 112.0,460.8 111.1,458.4 110.1,456.0 109.1,453.4" fill="url(#g14)"/><polygon points="262.4,338.1 111.1,458.4 110.1,456.0 109.1,453.4 108.1,450.8 107.1,448.1" fill="url(#g15)"/><polygon points="262.4,338.1 109.1,453.4 108.1,450.8 107.1,448.1 106.0,445.4 105.0,442.6" fill="url(#g16)"/><polygon points="262.4,338.1 107.1,448.1 106.0,445.4 105.0,442.6 103.9,439.7 102.9,436.7" fill="url(#g17)"/><polygon points="262.4,338.1 105.0,442.6 103.9,439.7 102.9,436.7 101.8,433.6 100.7,430.5" fill="url(#g18)"/><polygon points="262.4,338.1 102.9,436.7 101.8,433.6 100.7,430.5 99.7,427.2" fill="url(#g19)"/><polygon points="262.4,338.1 101.8,433.6 100.7,430.5 99.7,427.2 98.6,423.9" fill="url(#g20)"/><polygon points="262.4,338.1 100.7,430.5 99.7,427.2 98.6,423.9 97.8,421.2 97.0,418.6" fill="url(#g21)"/><polygon points="262.4,338.1 98.6,423.9 97.8,421.2 97.0,418.6 96.2,415.8 95.4,413.1" fill="url(#g22)"/><polygon points="262.4,338.1 97.0,418.6 96.2,415.8 95.4,413.1 94.6,410.2 93.8,407.3" fill="url(#g23)"/><polygon points="262.4,338.1 95.4,413.1 94.6,410.2 93.8,407.3 92.9,404.4 92.1,401.4" fill="url(#g24)"/><polygon points="262.4,338.1 93.8,407.3 92.9,404.4 92.1,401.4 91.3,398.4 90.5,395.3" fill="url(#g25)"/><polygon points="262.4,338.1 92.1,401.4 91.3,398.4 90.5,395.3 89.7,392.2" fill="url(#g26)"/><polygon points="262.4,338.1 91.3,398.4 90.5,395.3 89.7,392.2 88.9,389.0" fill="url(#g27)"/><polygon points="262.4,338.1 90.5,395.3 89.7,392.2 88.9,389.0 88.0,385.8" fill="url(#g28)"/><polygon points="262.4,338.1 89.7,392.2 88.9,389.0 88.0,385.8 87.2,382.6" fill="url(#g29)"/><polygon points="262.4,338.1 88.9,389.0 88.0,385.8 87.2,382.6 86.4,379.3" fill="url(#g30)"/><polygon points="262.4,338.1 88.0,385.8 87.2,382.6 86.4,379.3 85.6,376.0" fill="url(#g31)"/><polygon points="262.4,338.1 87.2,382.6 86.4,379.3 85.6,376.0 84.8,372.6" fill="url(#g32)"/><polygon points="262.4,338.1 86.4,379.3 85.6,376.0 84.8,372.6 84.2,369.8 83.6,367.0" fill="url(#g33)"/><polygon points="262.4,338.1 84.8,372.6 84.2,369.8 83.6,367.0 82.9,364.2 82.3,361.3" fill="url(#g34)"/><polygon points="262.4,338.1 83.6,367.0 82.9,364.2 82.3,361.3 81.6,358.3 81.0,355.4" fill="url(#g35)"/><polygon points="262.4,338.1 82.3,361.3 81.6,358.3 81.0,355.4 80.3,352.4 79.7,349.3" fill="url(#g36)"/><polygon points="262.4,338.1 81.0,355.4 80.3,352.4 79.7,349.3 79.0,346.3 78.4,343.2" fill="url(#g37)"/><polygon points="262.4,338.1 79.7,349.3 79.0,346.3 78.4,343.2 77.8,340.1 77.1,337.0" fill="url(#g38)"/><polygon points="262.4,338.1 78.4,343.2 77.8,340.1 77.1,337.0 76.5,333.9 75.9,330.7" fill="url(#g39)"/><polygon points="262.4,338.1 77.1,337.0 76.5,333.9 75.9,330.7 75.3,327.6 74.7,324.4" fill="url(#g40)"/><polygon points="262.4,338.1 75.9,330.7 75.3,327.6 74.7,324.4 74.1,321.2 73.5,318.1" fill="url(#g41)"/><polygon points="262.4,338.1 74.7,324.4 74.1,321.2 73.5,318.1 73.0,314.9 72.4,311.7" fill="url(#g42)"/><polygon points="262.4,338.1 73.5,318.1 73.0,314.9 72.4,311.7 71.9,308.6 71.4,305.6" fill="url(#g43)"/><polygon points="262.4,338.1 72.4,311.7 71.9,308.6 71.4,305.6 70.9,302.5 70.4,299.5" fill="url(#g44)"/><polygon points="262.4,338.1 71.4,305.6 70.9,302.5 70.4,299.5 69.9,296.4 69.4,293.3" fill="url(#g45)"/><polygon points="262.4,338.1 70.4,299.5 69.9,296.4 69.4,293.3 69.0,290.1 68.5,287.0" fill="url(#g46)"/><polygon points="262.4,338.1 69.4,293.3 69.0,290.1 68.5,287.0 68.0,283.8 67.6,280.7" fill="url(#g47)"/><polygon points="262.4,338.1 68.5,287.0 68.0,283.8 67.6,280.7 67.2,277.5 66.7,274.4" fill="url(#g48)"/><polygon points="262.4,338.1 67.6,280.7 67.2,277.5 66.7,274.4 66.3,271.2 65.9,268.1" fill="url(#g49)"/><polygon points="262.4,338.1 66.7,274.4 66.3,271.2 65.9,268.1 65.5,264.9 65.1,261.8" fill="url(#g50)"/><polygon points="262.4,338.1 65.9,268.1 65.5,264.9 65.1,261.8 64.7,258.6 64.4,255.5" fill="url(#g51)"/><polygon points="262.4,338.1 65.1,261.8 64.7,258.6 64.4,255.5 64.0,252.4 63.7,249.3" fill="url(#g52)"/><polygon points="262.4,338.1 64.4,255.5 64.0,252.4 63.7,249.3 63.4,246.3 63.1,243.3" fill="url(#g53)"/><polygon points="262.4,338.1 63.7,249.3 63.4,246.3 63.1,243.3 62.8,240.2 62.6,237.1" fill="url(#g54)"/><polygon points="262.4,338.1 63.1,243.3 62.8,240.2 62.6,237.1 62.3,234.0 62.1,230.8" fill="url(#g55)"/><polygon points="262.4,338.1 62.6,237.1 62.3,234.0 62.1,230.8 61.8,227.7 61.6,224.6 61.4,221.5" fill="url(#g56)"/><polygon points="262.4,338.1 61.8,227.7 61.6,224.6 61.4,221.5 61.2,218.4 61.0,215.3 60.9,212.2" fill="url(#g57)"/><polygon points="262.4,338.1 61.2,218.4 61.0,215.3 60.9,212.2 60.7,209.1 60.6,206.0 60.5,203.0" fill="url(#g58)"/><polygon points="262.4,338.1 60.7,209.1 60.6,206.0 60.5,203.0 60.4,200.0 60.3,197.0 60.2,194.1" fill="url(#g59)"/><polygon points="262.4,338.1 60.4,200.0 60.3,197.0 60.2,194.1 60.2,191.1 60.2,188.2 60.2,185.4" fill="url(#g60)"/><polygon points="262.4,338.1 60.2,191.1 60.2,188.2 60.2,185.4 60.2,182.5 60.2,179.7 60.3,177.0" fill="url(#g61)"/><polygon points="262.4,338.1 60.2,182.5 60.2,179.7 60.3,177.0 60.4,173.6 60.6,170.2 60.7,166.9" fill="url(#g62)"/><polygon points="262.4,338.1 60.4,173.6 60.6,170.2 60.7,166.9 60.9,163.6 61.2,160.3 61.4,157.1" fill="url(#g63)"/><polygon points="262.4,338.1 60.9,163.6 61.2,160.3 61.4,157.1 61.7,153.9 62.0,150.7 62.4,147.6" fill="url(#g64)"/><polygon points="262.4,338.1 61.7,153.9 62.0,150.7 62.4,147.6 62.7,144.6 63.1,141.6 63.6,138.6" fill="url(#g65)"/><polygon points="262.4,338.1 62.7,144.6 63.1,141.6 63.6,138.6 64.0,135.8 64.5,133.0 65.1,130.3 65.6,127.6" fill="url(#g66)"/><polygon points="262.4,338.1 64.5,133.0 65.1,130.3 65.6,127.6 66.2,125.1 67.1,121.6 68.1,118.2" fill="url(#g67)"/><polygon points="262.4,338.1 66.2,125.1 67.1,121.6 68.1,118.2 69.1,114.9 70.3,111.7 71.4,108.7" fill="url(#g68)"/><polygon points="262.4,338.1 69.1,114.9 70.3,111.7 71.4,108.7 72.7,105.8 74.0,103.0 75.3,100.4" fill="url(#g69)"/><polygon points="262.4,338.1 72.7,105.8 74.0,103.0 75.3,100.4 76.7,97.9 78.1,95.6 79.5,93.5 81.0,91.5" fill="url(#g70)"/><polygon points="262.4,338.1 78.1,95.6 79.5,93.5 81.0,91.5 83.3,88.8 85.7,86.6 88.3,84.7" fill="url(#g71)"/><polygon points="262.4,338.1 83.3,88.8 85.7,86.6 88.3,84.7 90.9,83.2 93.6,81.9 96.4,81.0" fill="url(#g72)"/><polygon points="262.4,338.1 90.9,83.2 93.6,81.9 96.4,81.0 99.2,80.2 101.9,79.6 105.2,79.3" fill="url(#g73)"/><polygon points="262.4,338.1 99.2,80.2 101.9,79.6 105.2,79.3 108.5,79.4 111.8,79.9 115.3,80.7" fill="url(#g74)"/><polygon points="262.4,338.1 108.5,79.4 111.8,79.9 115.3,80.7 118.7,81.6 122.1,82.7 125.5,83.8 128.5,84.8" fill="url(#g75)"/><polygon points="262.4,338.1 122.1,82.7 125.5,83.8 128.5,84.8 131.5,86.0 134.6,87.3 137.6,88.7 140.6,90.2" fill="url(#g76)"/><polygon points="262.4,338.1 134.6,87.3 137.6,88.7 140.6,90.2 143.6,91.7 146.6,93.3 149.5,94.8 152.4,96.3" fill="url(#g77)"/><polygon points="262.4,338.1 146.6,93.3 149.5,94.8 152.4,96.3 155.3,97.9 158.1,99.5 160.9,101.2 163.7,102.8" fill="url(#g78)"/><polygon points="262.4,338.1 158.1,99.5 160.9,101.2 163.7,102.8 166.5,104.5 169.3,106.3 172.1,108.0 174.8,109.8" fill="url(#g79)"/><polygon points="262.4,338.1 169.3,106.3 172.1,108.0 174.8,109.8 177.6,111.6 180.3,113.4 183.0,115.2 185.7,117.1" fill="url(#g80)"/><polygon points="262.4,338.1 180.3,113.4 183.0,115.2 185.7,117.1 188.4,119.0 191.1,120.9 193.8,122.8 196.5,124.8" fill="url(#g81)"/><polygon points="262.4,338.1 191.1,120.9 193.8,122.8 196.5,124.8 199.2,126.8 201.8,128.8 204.5,130.8" fill="url(#g82)"/><polygon points="262.4,338.1 199.2,126.8 201.8,128.8 204.5,130.8 207.2,132.9 209.9,135.0 212.5,137.1" fill="url(#g83)"/><polygon points="262.4,338.1 207.2,132.9 209.9,135.0 212.5,137.1 215.2,139.2 217.6,141.0 219.9,142.9" fill="url(#g84)"/><polygon points="262.4,338.1 215.2,139.2 217.6,141.0 219.9,142.9 222.3,144.9 224.6,146.8 227.0,148.7" fill="url(#g85)"/><polygon points="262.4,338.1 222.3,144.9 224.6,146.8 227.0,148.7 229.3,150.7 231.7,152.6 234.0,154.6" fill="url(#g86)"/><polygon points="262.4,338.1 229.3,150.7 231.7,152.6 234.0,154.6 236.4,156.6 238.7,158.5 241.1,160.5" fill="url(#g87)"/><polygon points="262.4,338.1 236.4,156.6 238.7,158.5 241.1,160.5 243.4,162.5 245.8,164.6" fill="url(#g88)"/><polygon points="262.4,338.1 241.1,160.5 243.4,162.5 245.8,164.6 248.1,166.6 250.4,168.6" fill="url(#g89)"/><polygon points="262.4,338.1 245.8,164.6 248.1,166.6 250.4,168.6 252.8,170.6 255.1,172.7" fill="url(#g90)"/><polygon points="262.4,338.1 250.4,168.6 252.8,170.6 255.1,172.7 257.5,174.7 259.8,176.8" fill="url(#g91)"/><polygon points="262.4,338.1 255.1,172.7 257.5,174.7 259.8,176.8 262.2,178.8 264.5,180.9" fill="url(#g92)"/><polygon points="262.4,338.1 259.8,176.8 262.2,178.8 264.5,180.9 266.9,183.0 269.2,185.1" fill="url(#g93)"/><polygon points="262.4,338.1 264.5,180.9 266.9,183.0 269.2,185.1 271.6,187.2 274.0,189.2" fill="url(#g94)"/><polygon points="262.4,338.1 269.2,185.1 271.6,187.2 274.0,189.2 276.3,191.3 278.7,193.4" fill="url(#g95)"/><polygon points="262.4,338.1 274.0,189.2 276.3,191.3 278.7,193.4 281.0,195.5" fill="url(#g96)"/><polygon points="262.4,338.1 276.3,191.3 278.7,193.4 281.0,195.5 283.3,197.6" fill="url(#g97)"/><polygon points="262.4,338.1 278.7,193.4 281.0,195.5 283.3,197.6 285.7,199.7" fill="url(#g98)"/><polygon points="262.4,338.1 281.0,195.5 283.3,197.6 285.7,199.7 288.0,201.8" fill="url(#g99)"/><polygon points="262.4,338.1 283.3,197.6 285.7,199.7 288.0,201.8 290.4,204.0" fill="url(#g100)"/><polygon points="262.4,338.1 285.7,199.7 288.0,201.8 290.4,204.0 292.7,206.1" fill="url(#g101)"/><polygon points="262.4,338.1 288.0,201.8 290.4,204.0 292.7,206.1 295.0,208.2" fill="url(#g102)"/><polygon points="262.4,338.1 290.4,204.0 292.7,206.1 295.0,208.2 297.4,210.3" fill="url(#g103)"/><polygon points="262.4,338.1 292.7,206.1 295.0,208.2 297.4,210.3 299.7,212.4" fill="url(#g104)"/><polygon points="262.4,338.1 295.0,208.2 297.4,210.3 299.7,212.4 302.0,214.5" fill="url(#g105)"/><polygon points="262.4,338.1 297.4,210.3 299.7,212.4 302.0,214.5 304.4,216.6" fill="url(#g106)"/><polygon points="262.4,338.1 299.7,212.4 302.0,214.5 304.4,216.6 306.7,218.7" fill="url(#g107)"/><polygon points="262.4,338.1 302.0,214.5 304.4,216.6 306.7,218.7 309.0,220.9" fill="url(#g108)"/><polygon points="262.4,338.1 304.4,216.6 306.7,218.7 309.0,220.9 311.4,223.0" fill="url(#g109)"/><polygon points="262.4,338.1 306.7,218.7 309.0,220.9 311.4,223.0 313.7,225.1" fill="url(#g110)"/><polygon points="262.4,338.1 309.0,220.9 311.4,223.0 313.7,225.1 316.0,227.2" fill="url(#g111)"/><polygon points="262.4,338.1 311.4,223.0 313.7,225.1 316.0,227.2 318.3,229.3" fill="url(#g112)"/><polygon points="262.4,338.1 313.7,225.1 316.0,227.2 318.3,229.3 320.6,231.4" fill="url(#g113)"/><polygon points="262.4,338.1 316.0,227.2 318.3,229.3 320.6,231.4 322.9,233.5" fill="url(#g114)"/><polygon points="262.4,338.1 318.3,229.3 320.6,231.4 322.9,233.5 325.2,235.6" fill="url(#g115)"/><polygon points="262.4,338.1 320.6,231.4 322.9,233.5 325.2,235.6 327.5,237.7" fill="url(#g116)"/><polygon points="262.4,338.1 322.9,233.5 325.2,235.6 327.5,237.7 329.8,239.8" fill="url(#g117)"/><polygon points="262.4,338.1 325.2,235.6 327.5,237.7 329.8,239.8 332.1,241.8" fill="url(#g118)"/><polygon points="262.4,338.1 327.5,237.7 329.8,239.8 332.1,241.8 334.4,243.9" fill="url(#g119)"/><polygon points="262.4,338.1 329.8,239.8 332.1,241.8 334.4,243.9 336.6,246.0" fill="url(#g120)"/><polygon points="262.4,338.1 332.1,241.8 334.4,243.9 336.6,246.0 338.9,248.1" fill="url(#g121)"/><polygon points="262.4,338.1 334.4,243.9 336.6,246.0 338.9,248.1 341.2,250.1" fill="url(#g122)"/><polygon points="262.4,338.1 336.6,246.0 338.9,248.1 341.2,250.1 343.4,252.2" fill="url(#g123)"/><polygon points="262.4,338.1 338.9,248.1 341.2,250.1 343.4,252.2 345.6,254.2" fill="url(#g124)"/><polygon points="262.4,338.1 341.2,250.1 343.4,252.2 345.6,254.2 347.9,256.3" fill="url(#g125)"/><polygon points="262.4,338.1 343.4,252.2 345.6,254.2 347.9,256.3 350.1,258.3" fill="url(#g126)"/><polygon points="262.4,338.1 345.6,254.2 347.9,256.3 350.1,258.3 352.3,260.4" fill="url(#g127)"/><polygon points="262.4,338.1 347.9,256.3 350.1,258.3 352.3,260.4 354.5,262.4" fill="url(#g128)"/><polygon points="262.4,338.1 350.1,258.3 352.3,260.4 354.5,262.4 356.7,264.4" fill="url(#g129)"/><polygon points="262.4,338.1 352.3,260.4 354.5,262.4 356.7,264.4 358.9,266.4" fill="url(#g130)"/><polygon points="262.4,338.1 354.5,262.4 356.7,264.4 358.9,266.4 361.1,268.4" fill="url(#g131)"/><polygon points="262.4,338.1 356.7,264.4 358.9,266.4 361.1,268.4 363.5,270.6" fill="url(#g132)"/><polygon points="262.4,338.1 358.9,266.4 361.1,268.4 363.5,270.6 366.0,272.9" fill="url(#g133)"/><polygon points="262.4,338.1 361.1,268.4 363.5,270.6 366.0,272.9 368.4,275.1" fill="url(#g134)"/><polygon points="262.4,338.1 363.5,270.6 366.0,272.9 368.4,275.1 370.8,277.3" fill="url(#g135)"/><polygon points="262.4,338.1 366.0,272.9 368.4,275.1 370.8,277.3 373.2,279.5" fill="url(#g136)"/><polygon points="262.4,338.1 368.4,275.1 370.8,277.3 373.2,279.5 375.5,281.6" fill="url(#g137)"/><polygon points="262.4,338.1 370.8,277.3 373.2,279.5 375.5,281.6 377.9,283.8" fill="url(#g138)"/><polygon points="262.4,338.1 373.2,279.5 375.5,281.6 377.9,283.8 380.2,285.9" fill="url(#g139)"/><polygon points="262.4,338.1 375.5,281.6 377.9,283.8 380.2,285.9 382.5,288.0" fill="url(#g140)"/><polygon points="262.4,338.1 377.9,283.8 380.2,285.9 382.5,288.0 384.8,290.1" fill="url(#g141)"/><polygon points="262.4,338.1 380.2,285.9 382.5,288.0 384.8,290.1 387.1,292.2" fill="url(#g142)"/><polygon points="262.4,338.1 382.5,288.0 384.8,290.1 387.1,292.2 389.4,294.3" fill="url(#g143)"/><polygon points="262.4,338.1 384.8,290.1 387.1,292.2 389.4,294.3 391.6,296.3" fill="url(#g144)"/><polygon points="262.4,338.1 387.1,292.2 389.4,294.3 391.6,296.3 393.8,298.4" fill="url(#g145)"/><polygon points="262.4,338.1 389.4,294.3 391.6,296.3 393.8,298.4 396.0,300.4" fill="url(#g146)"/><polygon points="262.4,338.1 391.6,296.3 393.8,298.4 396.0,300.4 398.2,302.3" fill="url(#g147)"/><polygon points="262.4,338.1 393.8,298.4 396.0,300.4 398.2,302.3 400.6,304.6" fill="url(#g148)"/><polygon points="262.4,338.1 396.0,300.4 398.2,302.3 400.6,304.6 403.0,306.8" fill="url(#g149)"/><polygon points="262.4,338.1 398.2,302.3 400.6,304.6 403.0,306.8 405.4,309.0" fill="url(#g150)"/><polygon points="262.4,338.1 400.6,304.6 403.0,306.8 405.4,309.0 407.8,311.2" fill="url(#g151)"/><polygon points="262.4,338.1 403.0,306.8 405.4,309.0 407.8,311.2 410.1,313.3 412.3,315.4" fill="url(#g152)"/><polygon points="262.4,338.1 407.8,311.2 410.1,313.3 412.3,315.4 414.6,317.4 417.1,319.7" fill="url(#g153)"/><polygon points="262.4,338.1 412.3,315.4 414.6,317.4 417.1,319.7 419.5,322.0 421.9,324.2" fill="url(#g154)"/><polygon points="262.4,338.1 417.1,319.7 419.5,322.0 421.9,324.2 424.3,326.3 426.6,328.4" fill="url(#g155)"/><polygon points="262.4,338.1 421.9,324.2 424.3,326.3 426.6,328.4 428.8,330.5 431.5,332.9" fill="url(#g156)"/><polygon points="262.4,338.1 426.6,328.4 428.8,330.5 431.5,332.9 434.0,335.3 436.6,337.6" fill="url(#g157)"/><polygon points="262.4,338.1 431.5,332.9 434.0,335.3 436.6,337.6 439.0,339.8 441.3,341.9" fill="url(#g158)"/><polygon points="262.4,338.1 436.6,337.6 439.0,339.8 441.3,341.9 444.1,344.5 446.8,346.9" fill="url(#g159)"/><polygon points="262.4,338.1 441.3,341.9 444.1,344.5 446.8,346.9 449.3,349.2 451.8,351.4" fill="url(#g160)"/><polygon points="262.4,338.1 446.8,346.9 449.3,349.2 451.8,351.4 454.8,354.2 457.6,356.8" fill="url(#g161)"/><polygon points="262.4,338.1 451.8,351.4 454.8,354.2 457.6,356.8 460.2,359.2 462.6,361.4 464.9,363.5" fill="url(#g162)"/><polygon points="262.4,338.1 460.2,359.2 462.6,361.4 464.9,363.5 467.0,365.4 469.8,367.9 472.3,370.3" fill="url(#g163)"/><polygon points="262.4,338.1 467.0,365.4 469.8,367.9 472.3,370.3 476.7,374.2 480.3,377.5" fill="url(#g164)"/><polygon points="262.4,338.1 472.3,370.3 476.7,374.2 480.3,377.5 483.2,380.3 485.6,382.4 487.4,384.0 489.7,386.2" fill="url(#g165)"/><polygon points="262.4,338.1 485.6,382.4 487.4,384.0 489.7,386.2 490.9,387.3 491.7,388.0 492.5,388.7 488.8,390.3 485.1,391.9" fill="url(#g166)"/><polygon points="262.4,338.1 492.5,388.7 488.8,390.3 485.1,391.9 481.5,393.5 477.8,395.0 474.1,396.6" fill="url(#g167)"/><polygon points="262.4,338.1 481.5,393.5 477.8,395.0 474.1,396.6 470.4,398.2 466.7,399.8 463.0,401.3" fill="url(#g168)"/><polygon points="262.4,338.1 470.4,398.2 466.7,399.8 463.0,401.3 459.3,402.9 455.7,404.5" fill="url(#g169)"/><polygon points="262.4,338.1 463.0,401.3 459.3,402.9 455.7,404.5 452.0,406.0 448.3,407.6" fill="url(#g170)"/><polygon points="262.4,338.1 455.7,404.5 452.0,406.0 448.3,407.6 444.6,409.2 440.9,410.8" fill="url(#g171)"/><polygon points="262.4,338.1 448.3,407.6 444.6,409.2 440.9,410.8 437.2,412.3 433.6,413.9" fill="url(#g172)"/><polygon points="262.4,338.1 440.9,410.8 437.2,412.3 433.6,413.9 429.9,415.5 426.2,417.1" fill="url(#g173)"/><polygon points="262.4,338.1 433.6,413.9 429.9,415.5 426.2,417.1 422.5,418.6 418.8,420.2" fill="url(#g174)"/><polygon points="262.4,338.1 426.2,417.1 422.5,418.6 418.8,420.2 415.1,421.8" fill="url(#g175)"/><polygon points="262.4,338.1 422.5,418.6 418.8,420.2 415.1,421.8 411.5,423.3" fill="url(#g176)"/><polygon points="262.4,338.1 418.8,420.2 415.1,421.8 411.5,423.3 407.8,424.9" fill="url(#g177)"/><polygon points="262.4,338.1 415.1,421.8 411.5,423.3 407.8,424.9 404.1,426.5" fill="url(#g178)"/><polygon points="262.4,338.1 411.5,423.3 407.8,424.9 404.1,426.5 400.4,428.1" fill="url(#g179)"/><polygon points="262.4,338.1 407.8,424.9 404.1,426.5 400.4,428.1 396.7,429.6" fill="url(#g180)"/><polygon points="262.4,338.1 404.1,426.5 400.4,428.1 396.7,429.6 393.0,431.2" fill="url(#g181)"/><polygon points="262.4,338.1 400.4,428.1 396.7,429.6 393.0,431.2 389.4,432.8" fill="url(#g182)"/><polygon points="262.4,338.1 396.7,429.6 393.0,431.2 389.4,432.8 385.7,434.3" fill="url(#g183)"/><polygon points="262.4,338.1 393.0,431.2 389.4,432.8 385.7,434.3 382.0,435.9" fill="url(#g184)"/><polygon points="262.4,338.1 389.4,432.8 385.7,434.3 382.0,435.9 378.3,437.5" fill="url(#g185)"/><polygon points="262.4,338.1 385.7,434.3 382.0,435.9 378.3,437.5 374.6,439.1" fill="url(#g186)"/><polygon points="262.4,338.1 382.0,435.9 378.3,437.5 374.6,439.1 370.9,440.6" fill="url(#g187)"/><polygon points="262.4,338.1 378.3,437.5 374.6,439.1 370.9,440.6 367.3,442.2" fill="url(#g188)"/><polygon points="262.4,338.1 374.6,439.1 370.9,440.6 367.3,442.2 363.6,443.8" fill="url(#g189)"/><polygon points="262.4,338.1 370.9,440.6 367.3,442.2 363.6,443.8 359.9,445.4" fill="url(#g190)"/><polygon points="262.4,338.1 367.3,442.2 363.6,443.8 359.9,445.4 356.2,446.9" fill="url(#g191)"/><polygon points="262.4,338.1 363.6,443.8 359.9,445.4 356.2,446.9 352.5,448.5" fill="url(#g192)"/><polygon points="262.4,338.1 359.9,445.4 356.2,446.9 352.5,448.5 348.8,450.1" fill="url(#g193)"/><polygon points="262.4,338.1 356.2,446.9 352.5,448.5 348.8,450.1 345.2,451.6" fill="url(#g194)"/><polygon points="262.4,338.1 352.5,448.5 348.8,450.1 345.2,451.6 341.5,453.2" fill="url(#g195)"/><polygon points="262.4,338.1 348.8,450.1 345.2,451.6 341.5,453.2 337.8,454.8" fill="url(#g196)"/><polygon points="262.4,338.1 345.2,451.6 341.5,453.2 337.8,454.8 334.1,456.4" fill="url(#g197)"/><polygon points="262.4,338.1 341.5,453.2 337.8,454.8 334.1,456.4 330.4,457.9" fill="url(#g198)"/><polygon points="262.4,338.1 337.8,454.8 334.1,456.4 330.4,457.9 326.7,459.5" fill="url(#g199)"/><polygon points="262.4,338.1 334.1,456.4 330.4,457.9 326.7,459.5 323.0,461.1" fill="url(#g200)"/><polygon points="262.4,338.1 330.4,457.9 326.7,459.5 323.0,461.1 319.4,462.7" fill="url(#g201)"/><polygon points="262.4,338.1 326.7,459.5 323.0,461.1 319.4,462.7 315.7,464.2" fill="url(#g202)"/><polygon points="262.4,338.1 323.0,461.1 319.4,462.7 315.7,464.2 312.0,465.8" fill="url(#g203)"/><polygon points="262.4,338.1 319.4,462.7 315.7,464.2 312.0,465.8 308.3,467.4" fill="url(#g204)"/><polygon points="262.4,338.1 315.7,464.2 312.0,465.8 308.3,467.4 304.6,468.9" fill="url(#g205)"/><polygon points="262.4,338.1 312.0,465.8 308.3,467.4 304.6,468.9 300.9,470.5" fill="url(#g206)"/><polygon points="262.4,338.1 308.3,467.4 304.6,468.9 300.9,470.5 297.3,472.1" fill="url(#g207)"/><polygon points="262.4,338.1 304.6,468.9 300.9,470.5 297.3,472.1 293.6,473.7" fill="url(#g208)"/><polygon points="262.4,338.1 300.9,470.5 297.3,472.1 293.6,473.7 289.9,475.2" fill="url(#g209)"/><polygon points="262.4,338.1 297.3,472.1 293.6,473.7 289.9,475.2 286.2,476.8" fill="url(#g210)"/><polygon points="262.4,338.1 293.6,473.7 289.9,475.2 286.2,476.8 282.5,478.4" fill="url(#g211)"/><polygon points="262.4,338.1 289.9,475.2 286.2,476.8 282.5,478.4 278.8,480.0" fill="url(#g212)"/><polygon points="262.4,338.1 286.2,476.8 282.5,478.4 278.8,480.0 275.2,481.5" fill="url(#g213)"/><polygon points="262.4,338.1 282.5,478.4 278.8,480.0 275.2,481.5 271.5,483.1" fill="url(#g214)"/><polygon points="262.4,338.1 278.8,480.0 275.2,481.5 271.5,483.1 267.8,484.7" fill="url(#g215)"/><polygon points="262.4,338.1 275.2,481.5 271.5,483.1 267.8,484.7 264.1,486.2" fill="url(#g216)"/><polygon points="262.4,338.1 271.5,483.1 267.8,484.7 264.1,486.2 260.4,487.8" fill="url(#g217)"/><polygon points="262.4,338.1 267.8,484.7 264.1,486.2 260.4,487.8 256.7,489.4" fill="url(#g218)"/><polygon points="262.4,338.1 264.1,486.2 260.4,487.8 256.7,489.4 253.1,491.0" fill="url(#g219)"/><polygon points="262.4,338.1 260.4,487.8 256.7,489.4 253.1,491.0 249.4,492.5" fill="url(#g220)"/><polygon points="262.4,338.1 256.7,489.4 253.1,491.0 249.4,492.5 245.7,494.1" fill="url(#g221)"/><polygon points="262.4,338.1 253.1,491.0 249.4,492.5 245.7,494.1 242.0,495.7" fill="url(#g222)"/><polygon points="262.4,338.1 249.4,492.5 245.7,494.1 242.0,495.7 238.3,497.3" fill="url(#g223)"/><polygon points="262.4,338.1 245.7,494.1 242.0,495.7 238.3,497.3 234.6,498.8" fill="url(#g224)"/><polygon points="262.4,338.1 242.0,495.7 238.3,497.3 234.6,498.8 231.0,500.4" fill="url(#g225)"/><polygon points="262.4,338.1 238.3,497.3 234.6,498.8 231.0,500.4 227.3,502.0" fill="url(#g226)"/><polygon points="262.4,338.1 234.6,498.8 231.0,500.4 227.3,502.0 223.6,503.5" fill="url(#g227)"/><polygon points="262.4,338.1 231.0,500.4 227.3,502.0 223.6,503.5 219.9,505.1" fill="url(#g228)"/><polygon points="262.4,338.1 227.3,502.0 223.6,503.5 219.9,505.1 216.2,506.7" fill="url(#g229)"/><polygon points="262.4,338.1 223.6,503.5 219.9,505.1 216.2,506.7 212.5,508.3" fill="url(#g230)"/><polygon points="262.4,338.1 219.9,505.1 216.2,506.7 212.5,508.3 208.9,509.8 205.2,511.4" fill="url(#g231)"/><polygon points="262.4,338.1 212.5,508.3 208.9,509.8 205.2,511.4 201.5,513.0 197.8,514.6" fill="url(#g232)"/><polygon points="262.4,338.1 205.2,511.4 201.5,513.0 197.8,514.6 194.1,516.1 190.4,517.7" fill="url(#g233)"/><polygon points="262.4,338.1 197.8,514.6 194.1,516.1 190.4,517.7 186.7,519.3 183.1,520.8" fill="url(#g234)"/><polygon points="262.4,338.1 190.4,517.7 186.7,519.3 183.1,520.8 179.4,522.4 175.7,524.0" fill="url(#g235)"/><polygon points="262.4,338.1 183.1,520.8 179.4,522.4 175.7,524.0 172.0,525.6 168.3,527.1" fill="url(#g236)"/><polygon points="262.4,338.1 175.7,524.0 172.0,525.6 168.3,527.1 164.6,528.7 161.0,530.3" fill="url(#g237)"/><polygon points="262.4,338.1 168.3,527.1 164.6,528.7 161.0,530.3 160.8,530.3" fill="url(#g238)"/></g><polygon points="161.0,530.3 160.8,530.3 160.5,530.4 160.1,530.4 159.4,530.2 157.9,529.2 155.2,527.1 150.6,523.4 148.2,521.4 145.6,519.1 143.2,516.9 140.6,514.3 138.1,511.3 136.1,508.6 133.8,505.4 131.4,501.6 129.8,499.0 128.2,496.1 126.5,493.1 124.7,489.6 122.8,485.8 121.7,483.5 120.6,481.1 119.5,478.6 118.3,476.0 117.1,473.3 115.9,470.4 114.6,467.4 113.3,464.2 112.0,460.8 111.1,458.4 110.1,456.0 109.1,453.4 108.1,450.8 107.1,448.1 106.0,445.4 105.0,442.6 103.9,439.7 102.9,436.7 101.8,433.6 100.7,430.5 99.7,427.2 98.6,423.9 97.8,421.2 97.0,418.6 96.2,415.8 95.4,413.1 94.6,410.2 93.8,407.3 92.9,404.4 92.1,401.4 91.3,398.4 90.5,395.3 89.7,392.2 88.9,389.0 88.0,385.8 87.2,382.6 86.4,379.3 85.6,376.0 84.8,372.6 84.2,369.8 83.6,367.0 82.9,364.2 82.3,361.3 81.6,358.3 81.0,355.4 80.3,352.4 79.7,349.3 79.0,346.3 78.4,343.2 77.8,340.1 77.1,337.0 76.5,333.9 75.9,330.7 75.3,327.6 74.7,324.4 74.1,321.2 73.5,318.1 73.0,314.9 72.4,311.7 71.9,308.6 71.4,305.6 70.9,302.5 70.4,299.5 69.9,296.4 69.4,293.3 69.0,290.1 68.5,287.0 68.0,283.8 67.6,280.7 67.2,277.5 66.7,274.4 66.3,271.2 65.9,268.1 65.5,264.9 65.1,261.8 64.7,258.6 64.4,255.5 64.0,252.4 63.7,249.3 63.4,246.3 63.1,243.3 62.8,240.2 62.6,237.1 62.3,234.0 62.1,230.8 61.8,227.7 61.6,224.6 61.4,221.5 61.2,218.4 61.0,215.3 60.9,212.2 60.7,209.1 60.6,206.0 60.5,203.0 60.4,200.0 60.3,197.0 60.2,194.1 60.2,191.1 60.2,188.2 60.2,185.4 60.2,182.5 60.2,179.7 60.3,177.0 60.4,173.6 60.6,170.2 60.7,166.9 60.9,163.6 61.2,160.3 61.4,157.1 61.7,153.9 62.0,150.7 62.4,147.6 62.7,144.6 63.1,141.6 63.6,138.6 64.0,135.8 64.5,133.0 65.1,130.3 65.6,127.6 66.2,125.1 67.1,121.6 68.1,118.2 69.1,114.9 70.3,111.7 71.4,108.7 72.7,105.8 74.0,103.0 75.3,100.4 76.7,97.9 78.1,95.6 79.5,93.5 81.0,91.5 83.3,88.8 85.7,86.6 88.3,84.7 90.9,83.2 93.6,81.9 96.4,81.0 99.2,80.2 101.9,79.6 105.2,79.3 108.5,79.4 111.8,79.9 115.3,80.7 118.7,81.6 122.1,82.7 125.5,83.8 128.5,84.8 131.5,86.0 134.6,87.3 137.6,88.7 140.6,90.2 143.6,91.7 146.6,93.3 149.5,94.8 152.4,96.3 155.3,97.9 158.1,99.5 160.9,101.2 163.7,102.8 166.5,104.5 169.3,106.3 172.1,108.0 174.8,109.8 177.6,111.6 180.3,113.4 183.0,115.2 185.7,117.1 188.4,119.0 191.1,120.9 193.8,122.8 196.5,124.8 199.2,126.8 201.8,128.8 204.5,130.8 207.2,132.9 209.9,135.0 212.5,137.1 215.2,139.2 217.6,141.0 219.9,142.9 222.3,144.9 224.6,146.8 227.0,148.7 229.3,150.7 231.7,152.6 234.0,154.6 236.4,156.6 238.7,158.5 241.1,160.5 243.4,162.5 245.8,164.6 248.1,166.6 250.4,168.6 252.8,170.6 255.1,172.7 257.5,174.7 259.8,176.8 262.2,178.8 264.5,180.9 266.9,183.0 269.2,185.1 271.6,187.2 274.0,189.2 276.3,191.3 278.7,193.4 281.0,195.5 283.3,197.6 285.7,199.7 288.0,201.8 290.4,204.0 292.7,206.1 295.0,208.2 297.4,210.3 299.7,212.4 302.0,214.5 304.4,216.6 306.7,218.7 309.0,220.9 311.4,223.0 313.7,225.1 316.0,227.2 318.3,229.3 320.6,231.4 322.9,233.5 325.2,235.6 327.5,237.7 329.8,239.8 332.1,241.8 334.4,243.9 336.6,246.0 338.9,248.1 341.2,250.1 343.4,252.2 345.6,254.2 347.9,256.3 350.1,258.3 352.3,260.4 354.5,262.4 356.7,264.4 358.9,266.4 361.1,268.4 363.5,270.6 366.0,272.9 368.4,275.1 370.8,277.3 373.2,279.5 375.5,281.6 377.9,283.8 380.2,285.9 382.5,288.0 384.8,290.1 387.1,292.2 389.4,294.3 391.6,296.3 393.8,298.4 396.0,300.4 398.2,302.3 400.6,304.6 403.0,306.8 405.4,309.0 407.8,311.2 410.1,313.3 412.3,315.4 414.6,317.4 417.1,319.7 419.5,322.0 421.9,324.2 424.3,326.3 426.6,328.4 428.8,330.5 431.5,332.9 434.0,335.3 436.6,337.6 439.0,339.8 441.3,341.9 444.1,344.5 446.8,346.9 449.3,349.2 451.8,351.4 454.8,354.2 457.6,356.8 460.2,359.2 462.6,361.4 464.9,363.5 467.0,365.4 469.8,367.9 472.3,370.3 476.7,374.2 480.3,377.5 483.2,380.3 485.6,382.4 487.4,384.0 489.7,386.2 490.9,387.3 491.7,388.0 492.5,388.7 488.8,390.3 485.1,391.9 481.5,393.5 477.8,395.0 474.1,396.6 470.4,398.2 466.7,399.8 463.0,401.3 459.3,402.9 455.7,404.5 452.0,406.0 448.3,407.6 444.6,409.2 440.9,410.8 437.2,412.3 433.6,413.9 429.9,415.5 426.2,417.1 422.5,418.6 418.8,420.2 415.1,421.8 411.5,423.3 407.8,424.9 404.1,426.5 400.4,428.1 396.7,429.6 393.0,431.2 389.4,432.8 385.7,434.3 382.0,435.9 378.3,437.5 374.6,439.1 370.9,440.6 367.3,442.2 363.6,443.8 359.9,445.4 356.2,446.9 352.5,448.5 348.8,450.1 345.2,451.6 341.5,453.2 337.8,454.8 334.1,456.4 330.4,457.9 326.7,459.5 323.0,461.1 319.4,462.7 315.7,464.2 312.0,465.8 308.3,467.4 304.6,468.9 300.9,470.5 297.3,472.1 293.6,473.7 289.9,475.2 286.2,476.8 282.5,478.4 278.8,480.0 275.2,481.5 271.5,483.1 267.8,484.7 264.1,486.2 260.4,487.8 256.7,489.4 253.1,491.0 249.4,492.5 245.7,494.1 242.0,495.7 238.3,497.3 234.6,498.8 231.0,500.4 227.3,502.0 223.6,503.5 219.9,505.1 216.2,506.7 212.5,508.3 208.9,509.8 205.2,511.4 201.5,513.0 197.8,514.6 194.1,516.1 190.4,517.7 186.7,519.3 183.1,520.8 179.4,522.4 175.7,524.0 172.0,525.6 168.3,527.1 164.6,528.7" fill="none" stroke="#363636" stroke-width="2.3" stroke-linejoin="round"/>
<clipPath id="hs"><polygon points="161.0,530.3 160.8,530.3 160.5,530.4 160.1,530.4 159.4,530.2 157.9,529.2 155.2,527.1 150.6,523.4 148.2,521.4 145.6,519.1 143.2,516.9 140.6,514.3 138.1,511.3 136.1,508.6 133.8,505.4 131.4,501.6 129.8,499.0 128.2,496.1 126.5,493.1 124.7,489.6 122.8,485.8 121.7,483.5 120.6,481.1 119.5,478.6 118.3,476.0 117.1,473.3 115.9,470.4 114.6,467.4 113.3,464.2 112.0,460.8 111.1,458.4 110.1,456.0 109.1,453.4 108.1,450.8 107.1,448.1 106.0,445.4 105.0,442.6 103.9,439.7 102.9,436.7 101.8,433.6 100.7,430.5 99.7,427.2 98.6,423.9 97.8,421.2 97.0,418.6 96.2,415.8 95.4,413.1 94.6,410.2 93.8,407.3 92.9,404.4 92.1,401.4 91.3,398.4 90.5,395.3 89.7,392.2 88.9,389.0 88.0,385.8 87.2,382.6 86.4,379.3 85.6,376.0 84.8,372.6 84.2,369.8 83.6,367.0 82.9,364.2 82.3,361.3 81.6,358.3 81.0,355.4 80.3,352.4 79.7,349.3 79.0,346.3 78.4,343.2 77.8,340.1 77.1,337.0 76.5,333.9 75.9,330.7 75.3,327.6 74.7,324.4 74.1,321.2 73.5,318.1 73.0,314.9 72.4,311.7 71.9,308.6 71.4,305.6 70.9,302.5 70.4,299.5 69.9,296.4 69.4,293.3 69.0,290.1 68.5,287.0 68.0,283.8 67.6,280.7 67.2,277.5 66.7,274.4 66.3,271.2 65.9,268.1 65.5,264.9 65.1,261.8 64.7,258.6 64.4,255.5 64.0,252.4 63.7,249.3 63.4,246.3 63.1,243.3 62.8,240.2 62.6,237.1 62.3,234.0 62.1,230.8 61.8,227.7 61.6,224.6 61.4,221.5 61.2,218.4 61.0,215.3 60.9,212.2 60.7,209.1 60.6,206.0 60.5,203.0 60.4,200.0 60.3,197.0 60.2,194.1 60.2,191.1 60.2,188.2 60.2,185.4 60.2,182.5 60.2,179.7 60.3,177.0 60.4,173.6 60.6,170.2 60.7,166.9 60.9,163.6 61.2,160.3 61.4,157.1 61.7,153.9 62.0,150.7 62.4,147.6 62.7,144.6 63.1,141.6 63.6,138.6 64.0,135.8 64.5,133.0 65.1,130.3 65.6,127.6 66.2,125.1 67.1,121.6 68.1,118.2 69.1,114.9 70.3,111.7 71.4,108.7 72.7,105.8 74.0,103.0 75.3,100.4 76.7,97.9 78.1,95.6 79.5,93.5 81.0,91.5 83.3,88.8 85.7,86.6 88.3,84.7 90.9,83.2 93.6,81.9 96.4,81.0 99.2,80.2 101.9,79.6 105.2,79.3 108.5,79.4 111.8,79.9 115.3,80.7 118.7,81.6 122.1,82.7 125.5,83.8 128.5,84.8 131.5,86.0 134.6,87.3 137.6,88.7 140.6,90.2 143.6,91.7 146.6,93.3 149.5,94.8 152.4,96.3 155.3,97.9 158.1,99.5 160.9,101.2 163.7,102.8 166.5,104.5 169.3,106.3 172.1,108.0 174.8,109.8 177.6,111.6 180.3,113.4 183.0,115.2 185.7,117.1 188.4,119.0 191.1,120.9 193.8,122.8 196.5,124.8 199.2,126.8 201.8,128.8 204.5,130.8 207.2,132.9 209.9,135.0 212.5,137.1 215.2,139.2 217.6,141.0 219.9,142.9 222.3,144.9 224.6,146.8 227.0,148.7 229.3,150.7 231.7,152.6 234.0,154.6 236.4,156.6 238.7,158.5 241.1,160.5 243.4,162.5 245.8,164.6 248.1,166.6 250.4,168.6 252.8,170.6 255.1,172.7 257.5,174.7 259.8,176.8 262.2,178.8 264.5,180.9 266.9,183.0 269.2,185.1 271.6,187.2 274.0,189.2 276.3,191.3 278.7,193.4 281.0,195.5 283.3,197.6 285.7,199.7 288.0,201.8 290.4,204.0 292.7,206.1 295.0,208.2 297.4,210.3 299.7,212.4 302.0,214.5 304.4,216.6 306.7,218.7 309.0,220.9 311.4,223.0 313.7,225.1 316.0,227.2 318.3,229.3 320.6,231.4 322.9,233.5 325.2,235.6 327.5,237.7 329.8,239.8 332.1,241.8 334.4,243.9 336.6,246.0 338.9,248.1 341.2,250.1 343.4,252.2 345.6,254.2 347.9,256.3 350.1,258.3 352.3,260.4 354.5,262.4 356.7,264.4 358.9,266.4 361.1,268.4 363.5,270.6 366.0,272.9 368.4,275.1 370.8,277.3 373.2,279.5 375.5,281.6 377.9,283.8 380.2,285.9 382.5,288.0 384.8,290.1 387.1,292.2 389.4,294.3 391.6,296.3 393.8,298.4 396.0,300.4 398.2,302.3 400.6,304.6 403.0,306.8 405.4,309.0 407.8,311.2 410.1,313.3 412.3,315.4 414.6,317.4 417.1,319.7 419.5,322.0 421.9,324.2 424.3,326.3 426.6,328.4 428.8,330.5 431.5,332.9 434.0,335.3 436.6,337.6 439.0,339.8 441.3,341.9 444.1,344.5 446.8,346.9 449.3,349.2 451.8,351.4 454.8,354.2 457.6,356.8 460.2,359.2 462.6,361.4 464.9,363.5 467.0,365.4 469.8,367.9 472.3,370.3 476.7,374.2 480.3,377.5 483.2,380.3 485.6,382.4 487.4,384.0 489.7,386.2 490.9,387.3 491.7,388.0 492.5,388.7 488.8,390.3 485.1,391.9 481.5,393.5 477.8,395.0 474.1,396.6 470.4,398.2 466.7,399.8 463.0,401.3 459.3,402.9 455.7,404.5 452.0,406.0 448.3,407.6 444.6,409.2 440.9,410.8 437.2,412.3 433.6,413.9 429.9,415.5 426.2,417.1 422.5,418.6 418.8,420.2 415.1,421.8 411.5,423.3 407.8,424.9 404.1,426.5 400.4,428.1 396.7,429.6 393.0,431.2 389.4,432.8 385.7,434.3 382.0,435.9 378.3,437.5 374.6,439.1 370.9,440.6 367.3,442.2 363.6,443.8 359.9,445.4 356.2,446.9 352.5,448.5 348.8,450.1 345.2,451.6 341.5,453.2 337.8,454.8 334.1,456.4 330.4,457.9 326.7,459.5 323.0,461.1 319.4,462.7 315.7,464.2 312.0,465.8 308.3,467.4 304.6,468.9 300.9,470.5 297.3,472.1 293.6,473.7 289.9,475.2 286.2,476.8 282.5,478.4 278.8,480.0 275.2,481.5 271.5,483.1 267.8,484.7 264.1,486.2 260.4,487.8 256.7,489.4 253.1,491.0 249.4,492.5 245.7,494.1 242.0,495.7 238.3,497.3 234.6,498.8 231.0,500.4 227.3,502.0 223.6,503.5 219.9,505.1 216.2,506.7 212.5,508.3 208.9,509.8 205.2,511.4 201.5,513.0 197.8,514.6 194.1,516.1 190.4,517.7 186.7,519.3 183.1,520.8 179.4,522.4 175.7,524.0 172.0,525.6 168.3,527.1 164.6,528.7"/></clipPath><path d="M113.5 98.5h8M117.5 94.5v8M172.5 98.5h8M176.5 94.5v8M113.5 152.5h8M117.5 148.5v8M172.5 152.5h8M176.5 148.5v8M113.5 207.5h8M117.5 203.5v8M172.5 207.5h8M176.5 203.5v8M231.5 207.5h8M235.5 203.5v8M113.5 261.5h8M117.5 257.5v8M172.5 261.5h8M176.5 257.5v8M231.5 261.5h8M235.5 257.5v8M291.5 261.5h8M295.5 257.5v8M113.5 316.5h8M117.5 312.5v8M172.5 316.5h8M176.5 312.5v8M231.5 316.5h8M235.5 312.5v8M291.5 316.5h8M295.5 312.5v8M350.5 316.5h8M354.5 312.5v8M113.5 370.5h8M117.5 366.5v8M172.5 370.5h8M176.5 366.5v8M231.5 370.5h8M235.5 366.5v8M291.5 370.5h8M295.5 366.5v8M350.5 370.5h8M354.5 366.5v8M409.5 370.5h8M413.5 366.5v8M113.5 424.5h8M117.5 420.5v8M172.5 424.5h8M176.5 420.5v8M231.5 424.5h8M235.5 420.5v8M291.5 424.5h8M295.5 420.5v8M350.5 424.5h8M354.5 420.5v8M172.5 479.5h8M176.5 475.5v8M231.5 479.5h8M235.5 475.5v8M291.5 479.5h8M295.5 475.5v8" stroke="#a8a8a8" stroke-width="1" fill="none" shape-rendering="crispEdges"/><path clip-path="url(#hs)" d="M231.5 152.5h8M235.5 148.5v8M291.5 207.5h8M295.5 203.5v8M350.5 261.5h8M354.5 257.5v8M113.5 479.5h8M117.5 475.5v8" stroke="#a8a8a8" stroke-width="1" fill="none" shape-rendering="crispEdges"/>
<path d="M58.5 534V537M117.5 534V537M176.5 534V537M235.5 534V537M294.5 534V537M353.5 534V537M412.5 534V537M471.5 534V537M55 533.5H58M55 479.5H58M55 424.5H58M55 370.5H58M55 316.5H58M55 261.5H58M55 207.5H58M55 152.5H58M55 98.5H58" stroke="#b4b4b4" stroke-width="1" shape-rendering="crispEdges"/>
<path d="M117.5 528V533M117.5 76V81M176.5 528V533M176.5 76V81M235.5 528V533M235.5 76V81M294.5 528V533M294.5 76V81M353.5 528V533M353.5 76V81M412.5 528V533M412.5 76V81M471.5 528V533M471.5 76V81M59 479.5H63M495 479.5H499M59 424.5H63M495 424.5H499M59 370.5H63M495 370.5H499M59 316.5H63M495 316.5H499M59 261.5H63M495 261.5H499M59 207.5H63M495 207.5H499M59 152.5H63M495 152.5H499M59 98.5H63M495 98.5H499" stroke="#000" stroke-width="1" shape-rendering="crispEdges"/>
<g font-size="12" fill="#000"><text x="58.5" y="548" text-anchor="middle">0</text><text x="117.6" y="548" text-anchor="middle">0.1</text><text x="176.8" y="548" text-anchor="middle">0.2</text><text x="235.9" y="548" text-anchor="middle">0.3</text><text x="295.1" y="548" text-anchor="middle">0.4</text><text x="354.2" y="548" text-anchor="middle">0.5</text><text x="413.3" y="548" text-anchor="middle">0.6</text><text x="472.5" y="548" text-anchor="middle">0.7</text><text x="53.5" y="536.7" text-anchor="end">0</text><text x="53.5" y="482.3" text-anchor="end">0.1</text><text x="53.5" y="428.0" text-anchor="end">0.2</text><text x="53.5" y="373.6" text-anchor="end">0.3</text><text x="53.5" y="319.2" text-anchor="end">0.4</text><text x="53.5" y="264.8" text-anchor="end">0.5</text><text x="53.5" y="210.4" text-anchor="end">0.6</text><text x="53.5" y="156.1" text-anchor="end">0.7</text><text x="53.5" y="101.7" text-anchor="end">0.8</text></g>
<polygon points="247.1,208.8 440.5,352 149.9,496.7" fill="none" stroke="#1a1a2a" stroke-width="2" stroke-dasharray="1.7 1.8"/>
<polygon points="238.9,231.8 431.7,359.9 144.1,503.6" fill="none" stroke="#000" stroke-width="2.2" stroke-linejoin="miter"/>
<circle cx="261" cy="337" r="1.8" fill="#505050"/>
<circle cx="160.5" cy="530.4" r="3.8" fill="#3a00c8" stroke="#9a9a9a" stroke-width="1"/><circle cx="131.4" cy="501.6" r="3.8" fill="#0010c0" stroke="#9a9a9a" stroke-width="1"/><circle cx="112.0" cy="460.8" r="3.8" fill="#0a40c0" stroke="#9a9a9a" stroke-width="1"/><circle cx="84.8" cy="372.6" r="3.8" fill="#1a80b0" stroke="#9a9a9a" stroke-width="1"/><circle cx="62.8" cy="240.2" r="3.8" fill="#10c080" stroke="#9a9a9a" stroke-width="1"/><circle cx="66.2" cy="125.1" r="3.8" fill="#20d040" stroke="#9a9a9a" stroke-width="1"/><circle cx="101.9" cy="79.6" r="3.8" fill="#10e010" stroke="#9a9a9a" stroke-width="1"/><circle cx="149.5" cy="94.8" r="3.8" fill="#10d010" stroke="#9a9a9a" stroke-width="1"/><circle cx="193.8" cy="122.8" r="3.8" fill="#30c010" stroke="#9a9a9a" stroke-width="1"/><circle cx="278.7" cy="193.4" r="3.8" fill="#70a010" stroke="#9a9a9a" stroke-width="1"/><circle cx="361.1" cy="268.4" r="3.8" fill="#a08000" stroke="#9a9a9a" stroke-width="1"/><circle cx="428.8" cy="330.5" r="3.8" fill="#c04800" stroke="#9a9a9a" stroke-width="1"/><circle cx="467.0" cy="365.4" r="3.8" fill="#c8001a" stroke="#9a9a9a" stroke-width="1"/><circle cx="492.5" cy="388.7" r="3.8" fill="#e00010" stroke="#9a9a9a" stroke-width="1"/>
<g font-size="12"><text x="126.0" y="530.4" fill="#e8e8e8">400</text><text x="101.5" y="505.9" fill="#e8e8e8">470</text><text x="81.5" y="465.4" fill="#e8e8e8">480</text><text x="94.0" y="377.1" fill="#2a2a3a">490</text><text x="72.5" y="244.9" fill="#2a2a3a">500</text><text x="75.3" y="129.7" fill="#e8e8e8">510</text><text x="67.4" y="86.8" fill="#e8e8e8">520</text><text x="159.3" y="99.9" fill="#e8e8e8">530</text><text x="202.9" y="127.9" fill="#e8e8e8">540</text><text x="288.3" y="199.2" fill="#e8e8e8">560</text><text x="369.8" y="272.8" fill="#e8e8e8">580</text><text x="438.5" y="335.0" fill="#e8e8e8">600</text><text x="476.3" y="370.0" fill="#e8e8e8">620</text><text x="462.0" y="392.1" fill="#b00018">700</text></g>
<g font-size="11.5" font-weight="bold" fill="#f0f0f0" text-anchor="end" letter-spacing="-0.2" style="white-space:pre"><text x="487.6" y="91.6" xml:space="preserve">Input:  *sRGB</text><text x="487.6" y="105.6" xml:space="preserve">Output: PG32UQX_blf4.icm</text><text x="487.6" y="119.5" xml:space="preserve">White point:  x = 0.344  y = 0.36</text><text x="487.6" y="133.2" xml:space="preserve">05-Jul-2021 00:51:50</text></g>
<text x="276.6" y="563.5" font-size="13" font-weight="bold" text-anchor="middle">x</text>
<text transform="translate(26,304.5) rotate(-90)" font-size="13" font-weight="bold" text-anchor="middle">y</text>
</svg>


<!-- right panel -->
<div class="a" id="hue" style="left:552px;top:56px;width:234px;height:233px;background:linear-gradient(to right,#ff1530 0%,#ff9a50 9%,#fff36a 17%,#a0f060 25%,#3af060 33%,#30f0a0 41%,#00ffee 50%,#0090e8 56%,#0030e0 62%,#0000e8 66%,#0000e4 70%,#5000e0 74%,#a000e8 78%,#ff00f0 84%,#ff0070 92%,#ff0030 100%)">
  <div class="a" style="left:0;top:0;width:100%;height:100%;background:linear-gradient(to bottom,rgba(128,128,128,0) 0%,rgba(128,128,128,.08) 15%,rgba(124,124,124,.38) 45%,rgba(122,122,122,.56) 62%,rgba(126,126,126,.78) 80%,rgba(128,128,128,1) 100%)"></div>
  <div class="a" style="left:138px;top:0;width:40px;height:120px;background:linear-gradient(to bottom,rgba(0,0,225,.0),rgba(0,30,200,.55) 60%,rgba(0,40,180,0)),linear-gradient(to right,rgba(0,0,0,0),#0000e0 50%,rgba(0,0,0,0));-webkit-mask-image:linear-gradient(to right,transparent,#000 45%,#000 60%,transparent),linear-gradient(to bottom,#000 50%,transparent);-webkit-mask-composite:source-in;mask-composite:intersect;opacity:.7"></div>
</div>
<div class="cb" style="left:553px;top:298px"></div>
<div class="t c" style="left:570px;top:299.3px">Zoom</div>
<div class="btn c" style="left:553px;top:316px;width:48px;height:20px;line-height:20px">Z-Out</div>
<div class="a" style="left:616px;top:290px;width:175px;height:28px;background:#808080;border:1px solid #404040"></div>
<div class="btn c" style="left:622px;top:295px;width:39px;height:20px;line-height:20px">Inp</div>
<div class="btn c" style="left:665px;top:295px;width:38px;height:20px;line-height:20px">I&gt;M</div>
<div class="btn c" style="left:707px;top:295px;width:39px;height:20px;line-height:20px">Outp</div>
<div class="btn" style="left:750px;top:295px;width:38px;height:20px;line-height:20px;background:#ffffcc;font-weight:bold;font-size:11px">O&gt;M</div>
<div class="t c" style="left:630.5px;top:324.3px">Black Pt. Comp.</div>
<div class="dd c" style="left:710px;top:320px;width:78px;height:19px"><span class="tx" style="left:3px">Both</span><span class="ar"></span></div>
<div class="a" style="left:553px;top:341px;width:240px;height:27px;background:#808080;border:1px solid #404040"></div>
<div class="dd" style="left:557px;top:345px;width:232px;height:19px;font-weight:bold;font-size:12px;letter-spacing:-.21px"><span class="tx" style="left:3.5px;bottom:1px">xy Chromaticity (Saturation map)</span><span class="ar"></span></div>
<div class="pan" style="left:553px;top:369px;width:240px;height:159px"></div>
<div class="btn c dis" style="left:559px;top:375px;width:79px;height:23px;line-height:23px">Reset scale</div>
<div class="btn c dis" style="left:642px;top:375px;width:76px;height:23px;line-height:23px">Reset view</div>
<div class="btn c dis" style="left:723px;top:375px;width:66px;height:23px;line-height:23px">Top view</div>
<div class="cb" style="left:558px;top:404px">
 <svg width="12" height="12" style="position:absolute;left:0;top:0"><path d="M2.8 5.3 L5 8 L9.3 3" stroke="#000" stroke-width="2" fill="none"/></svg></div>
<div class="t c" style="left:576px;top:404.7px">Wavelth</div>
<div class="dd c" style="left:627px;top:401px;width:162px;height:19px"><span class="tx">Normal/gamut boundaries</span><span class="ar"></span></div>
<div class="a" style="left:553px;top:468px;width:88px;height:30px;border:1px solid #000;border-bottom:none"></div>
<div class="btn" style="left:558px;top:473px;width:78px;height:21px;line-height:21px;font-weight:bold;font-size:12px">Print Test</div>
<div class="a" style="left:553px;top:497px;width:240px;height:1px;background:#000"></div>
<div class="a c" style="left:559px;top:504px;width:230px;height:18px;background:#f0f0f0;box-shadow:inset 1px 1px #a0a0a0,inset -1px -1px #fff,inset 2px 2px #696969,inset -2px -2px #e3e3e3;text-align:center;line-height:18px">not selected</div>

<div class="pan" style="left:559px;top:532px;width:143px;height:56px"></div>
<div class="t" style="left:569.5px;top:539.2px;font-size:11.6px;font-weight:bold">Display A</div>
<div class="btn" style="left:650px;top:537px;width:47px;height:23px;line-height:23px;font-weight:bold;font-size:12px">View</div>
<div class="dd c" style="left:563px;top:562px;width:39px;height:19px"><span class="tx">1</span><span class="ar"></span></div>
<div class="t c" style="left:611px;top:566.9px;letter-spacing:0">IN&nbsp; OUT</div>
<div class="dd c" style="left:659px;top:563px;width:39px;height:19px"><span class="tx">3</span><span class="ar"></span></div>
<div class="pan" style="left:559px;top:592px;width:143px;height:56px"></div>
<div class="t" style="left:569.5px;top:599.2px;font-size:11.6px;font-weight:bold">Display B</div>
<div class="btn" style="left:651px;top:596px;width:47px;height:23px;line-height:23px;font-weight:bold;font-size:12px">View</div>
<div class="dd c" style="left:563px;top:623px;width:39px;height:19px"><span class="tx">2</span><span class="ar"></span></div>
<div class="t c" style="left:611px;top:627.2px;letter-spacing:0">IN&nbsp; OUT</div>
<div class="dd c" style="left:660px;top:623px;width:39px;height:19px"><span class="tx">4</span><span class="ar"></span></div>
<div class="btn c" style="left:720px;top:532px;width:70px;height:23px;line-height:23px">Help</div>
<div class="btn c" style="left:720px;top:565px;width:70px;height:23px;line-height:23px">Exit</div>
<svg class="a" style="left:709px;top:596px" width="80" height="48" viewBox="0 0 80 48">
 <defs><linearGradient id="lg" x1="0" x2="1" y1="0" y2="0.3"><stop offset="0" stop-color="#000078"/><stop offset="1" stop-color="#0000d8"/></linearGradient>
 <linearGradient id="lgg" x1="0" x2="1"><stop offset="0" stop-color="#002000"/><stop offset="1" stop-color="#008010"/></linearGradient></defs>
 <rect width="80" height="48" fill="url(#lg)"/>
 <polygon points="0,0 80,0 80,11.3" fill="url(#lgg)"/>
 <polygon points="0,0 80,11.3 80,17.3" fill="#ffffff"/>
 <polygon points="0,0 80,17.3 80,23.2" fill="#d03808"/>
 <polygon points="0,0 80,23.2 80,25.3" fill="#ffffff"/>
 <polygon points="0,0 80,25.3 80,28.6" fill="#a020a0"/>
 <polygon points="0,0 80,28.6 80,31" fill="#ffffff"/>
 <path d="M4.5 7.5 C 5.5 5, 9 5.5, 13 8 L 31.3 20.3 L 9.9 27.8 C 6.5 22, 4 14, 4.5 7.5 Z" fill="#fff8c0"/>
 <text x="3" y="44.2" font-family="Liberation Serif" font-style="italic" font-weight="bold" font-size="16" fill="#fff" textLength="76.5" lengthAdjust="spacingAndGlyphs">Gamutvision</text>
</svg>

<!-- bottom -->
<div class="t" style="left:8.5px;top:578.8px;font-size:11.5px;font-weight:bold">1</div>
<div class="dd c" style="left:20px;top:575px;width:253px;height:20px;background:#ffffd0"><span class="tx">*sRGB&nbsp;&nbsp; (IEC6 1996-2.1 sRGB)</span><span class="ar"></span></div>
<div class="dd c" style="left:278px;top:575px;width:253px;height:20px;background:#f0f0f0"><span class="tx">Browse...</span><span class="ar"></span></div>
<div class="t" style="left:535.5px;top:579px;font-size:11.5px;font-weight:bold">3</div>
<div class="a" style="left:6px;top:597px;width:12px;height:28px;background:#d4d4d4"></div>
<svg class="a" style="left:6px;top:597px" width="12" height="28"><path d="M6 1 V21" stroke="#505050" stroke-width="3"/><polygon points="1.5,20 10.5,20 6,27" fill="#505050"/></svg>
<div class="a" style="left:20px;top:596px;width:223px;height:31px;background:#4a7cc8;border-left:1px solid #000;border-right:1px solid #000"></div>
<div class="btn yb" style="left:25px;top:601px;width:47px;height:24px;line-height:24px;font-weight:bold;font-size:12px;background:#ffffcc">View</div>
<div class="dd c" style="left:95px;top:602px;width:141px;height:20px;background:#ffffe8"><span class="tx">None (or Print Test)</span><span class="ar"></span></div>
<div class="t c" style="left:250.5px;top:606.7px">Rendering</div>
<div class="a" style="left:308px;top:596px;width:223px;height:31px;background:#808080;border-left:1px solid #000;border-right:1px solid #000"></div>
<div class="dd c" style="left:312px;top:601px;width:142px;height:21px;background:#f0f0f0"><span class="tx">Absolute</span><span class="ar"></span></div>
<div class="btn" style="left:480px;top:601px;width:47px;height:23px;line-height:23px;font-weight:bold;font-size:12px">View</div>
<div class="a" style="left:534px;top:598px;width:11px;height:27px;background:#d4d4d4"></div>
<svg class="a" style="left:534px;top:598px" width="11" height="27"><path d="M5.5 1 V20" stroke="#505050" stroke-width="3"/><polygon points="1,19 10,19 5.5,26" fill="#505050"/></svg>
<div class="t" style="left:8.5px;top:631.2px;font-size:11.5px;font-weight:bold">2</div>
<div class="dd c" style="left:20px;top:628px;width:253px;height:18px;background:#e8ffe8"><span class="tx">PG32UQX_blf4.icm</span><span class="ar"></span></div>
<div class="dd c" style="left:278px;top:628px;width:253px;height:18px;background:#f0f0f0"><span class="tx">Browse...</span><span class="ar"></span></div>
<div class="t" style="left:535.5px;top:631.2px;font-size:11.5px;font-weight:bold">4</div>
<svg class="a" style="left:330px;top:15px" width="40" height="35" viewBox="330 15 40 35"><path d="M342.5 23.5 L342.5 39.6 L346.3 36.2 L349.2 41.6 L351.3 40.6 L348.7 35.4 L353.8 35.4 Z" fill="#fff" stroke="#1a1a24" stroke-width="1.1" stroke-linejoin="round"/></svg>
</body></html>
